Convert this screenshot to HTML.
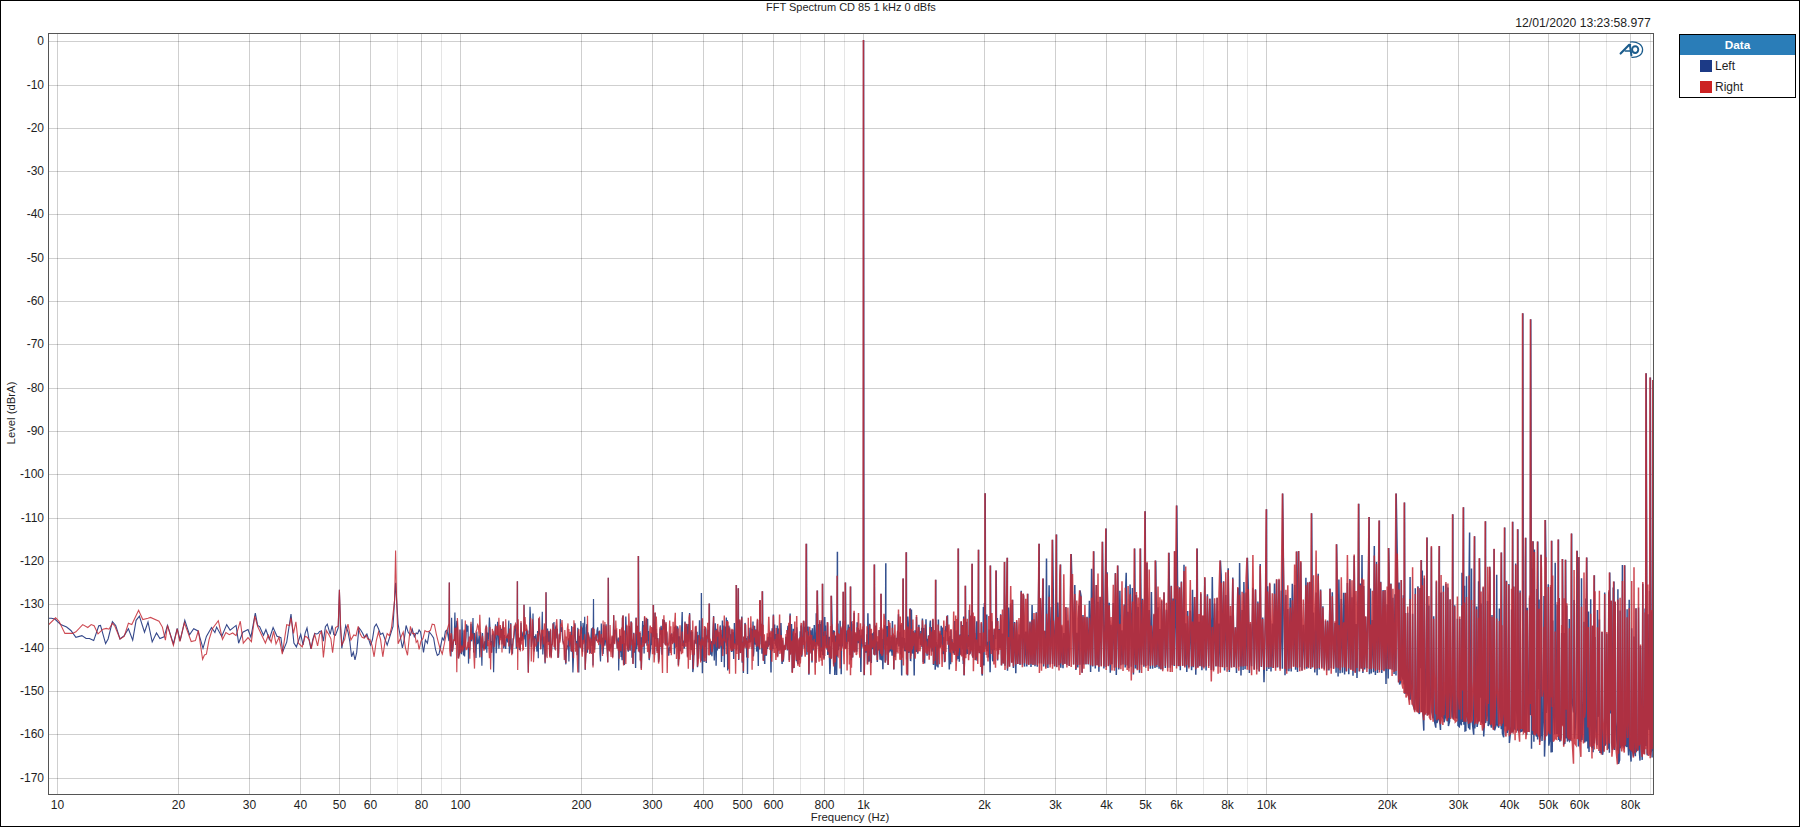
<!DOCTYPE html><html><head><meta charset="utf-8"><style>html,body{margin:0;padding:0;background:#fff;}svg{display:block;}text{font-family:"Liberation Sans",sans-serif;fill:#1e1e1e;}</style></head><body>
<svg width="1800" height="827" viewBox="0 0 1800 827">
<rect x="0" y="0" width="1800" height="827" fill="#fff"/>
<path d="M397.5 34V794M441.5 34V794M800.5 34V794M844.5 34V794M1203.5 34V794M1247.5 34V794M1606.5 34V794M1650.5 34V794" stroke="#000" stroke-opacity="0.1" stroke-width="1" fill="none"/>
<path d="M57.5 34V794M178.5 34V794M249.5 34V794M300.5 34V794M339.5 34V794M370.5 34V794M421.5 34V794M460.5 34V794M581.5 34V794M652.5 34V794M703.5 34V794M742.5 34V794M773.5 34V794M824.5 34V794M863.5 34V794M984.5 34V794M1055.5 34V794M1106.5 34V794M1145.5 34V794M1176.5 34V794M1227.5 34V794M1266.5 34V794M1387.5 34V794M1458.5 34V794M1509.5 34V794M1548.5 34V794M1579.5 34V794M1630.5 34V794" stroke="#000" stroke-opacity="0.19" stroke-width="1" fill="none"/>
<path d="M49 41.5H1653M49 85.5H1653M49 128.5H1653M49 171.5H1653M49 214.5H1653M49 258.5H1653M49 301.5H1653M49 344.5H1653M49 388.5H1653M49 431.5H1653M49 474.5H1653M49 518.5H1653M49 561.5H1653M49 604.5H1653M49 648.5H1653M49 691.5H1653M49 734.5H1653M49 778.5H1653" stroke="#000" stroke-opacity="0.19" stroke-width="1" fill="none"/>
<defs><clipPath id="pc"><rect x="49" y="34" width="1604" height="760"/></clipPath></defs>
<g clip-path="url(#pc)" fill="none" stroke-linejoin="miter">
<path stroke="#34488a" stroke-width="1.1" d="M48.8 618.2L51.4 618.2L54.8 619.0L60.7 624.6L66.6 627.1L70.9 630.5L75.9 637.3L81.9 635.6L86.1 638.5L89.5 638.5L93.7 640.6L98.8 625.8L100.5 625.4L105.6 643.6L108.1 639.0L112.4 621.6L115.7 625.4L120.0 639.0L124.2 635.6L128.4 628.8L132.7 640.2L136.1 620.3L139.4 616.1L144.5 632.2L148.0 622.0L152.2 641.9L156.5 633.0L159.9 638.5L164.1 636.8L167.5 625.4L173.4 644.0L177.2 628.4L180.2 640.6L184.8 620.3L189.5 634.7L193.7 628.8L198.0 630.9L203.0 648.3L206.4 636.4L211.5 627.5L214.9 632.6L216.6 627.1L221.7 636.4L226.7 624.6L230.1 630.1L236.1 625.4L238.6 643.2L242.8 632.2L248.0 629.5L250.9 637.2L255.3 613.0L257.7 625.6L259.6 626.6L263.5 635.3L265.9 629.5L269.3 639.2L273.1 627.6L277.0 636.3L280.9 637.7L282.8 651.7L286.7 642.1L291.0 614.0L293.9 643.0L296.4 646.9L300.7 634.3L303.1 645.0L305.1 633.4L307.0 628.0L308.9 638.9L310.9 648.8L312.8 639.5L314.7 633.4L316.3 634.0L318.0 633.6L319.6 631.4L321.5 631.0L323.4 641.1L325.4 626.8L327.3 624.2L330.2 634.3L332.1 625.6L333.8 634.5L335.5 635.3L338.2 628.0L339.4 589.8L340.6 628.0L341.8 648.3L345.7 625.6L348.0 632.0L349.8 641.5L351.6 656.8L353.3 652.1L355.0 659.8L356.7 652.4L358.9 627.7L360.7 630.0L362.5 633.0L364.7 637.5L366.9 634.0L368.7 639.3L370.5 645.1L372.4 639.8L374.4 626.9L376.3 624.1L378.5 628.7L380.6 634.4L382.8 633.0L385.0 639.3L387.2 645.1L393.0 626.3L395.6 582.7L398.1 624.1L402.4 648.0L404.2 639.6L406.1 625.5L408.2 632.3L410.4 635.0L412.3 629.1L414.3 636.8L416.2 633.0L417.7 633.8L419.1 629.9L420.6 632.0L423.5 652.4L425.4 640.0L427.4 643.2L429.3 632.0L431.5 634.7L433.6 638.0L435.5 649.3L437.3 655.3L439.0 654.1L440.6 646.3L442.3 638.0L443.9 640.4L445.4 631.4L447.0 630.0"/>
<path stroke="#34508f" stroke-width="1.2" d="M447.0 630.0L449.0 641.1L449.4 582.5L449.7 639.7L450.4 635.4L451.0 656.4L451.6 617.8L452.3 651.5L452.8 649.8L453.5 641.4L454.2 640.0L454.9 612.6L455.6 645.0L456.2 630.6L456.8 620.8L457.4 624.2L458.1 658.2L458.7 656.7L459.4 654.1L460.0 629.4L460.6 649.8L461.4 654.2L462.0 619.3L462.8 648.9L463.5 655.5L464.1 630.4L464.6 656.4L465.3 643.3L466.0 637.3L466.6 624.3L467.1 631.6L468.0 625.7L468.5 663.6L469.2 647.0L469.8 650.5L470.4 637.9L471.0 623.7L471.6 641.3L472.2 637.4L473.0 617.9L473.7 652.5L474.5 632.9L475.2 640.4L476.0 658.0L476.8 631.6L477.6 643.9L478.4 642.0L479.1 635.6L479.8 657.4L480.5 631.9L481.2 641.4L481.9 665.8L482.5 633.0L483.3 647.0L484.0 649.2L484.7 641.4L485.4 649.4L486.2 625.7L486.8 652.8L487.5 632.5L488.1 641.2L488.7 635.5L489.4 617.5L489.9 626.0L490.6 645.2L491.1 641.1L491.6 652.5L492.3 635.4L493.0 633.5L493.6 672.3L494.1 646.4L494.7 635.9L495.5 624.3L496.2 653.2L496.9 643.1L497.6 621.7L498.2 632.1L498.9 648.7L499.6 638.6L500.4 626.8L501.0 638.2L501.5 628.8L502.0 644.4L502.5 639.4L503.2 621.6L503.7 648.4L504.4 635.0L505.0 645.1L505.7 649.0L506.4 637.3L507.0 636.2L507.6 642.5L508.2 633.2L508.8 620.5L509.4 653.4L510.1 640.5L510.8 623.0L511.2 649.6L511.8 643.8L512.5 653.7L513.0 638.9L513.6 638.9L514.2 635.0L514.8 626.7L515.5 624.4L516.3 648.5L516.7 647.7L517.2 627.8L517.5 581.2L517.7 642.4L518.2 633.5L518.7 639.8L519.4 649.9L519.8 638.1L520.3 650.1L521.0 622.8L521.8 640.9L522.3 639.4L522.8 632.8L523.4 631.4L523.9 639.5L524.1 604.8L524.5 632.7L525.1 636.4L525.8 646.9L526.4 628.5L527.1 633.0L527.7 632.0L528.3 672.3L528.9 647.9L529.4 634.3L530.0 606.7L530.6 617.6L531.3 647.0L531.8 643.2L532.5 638.1L533.0 613.6L533.5 636.4L534.2 651.4L534.8 636.0L535.3 639.0L535.8 634.4L536.5 645.6L536.9 651.6L537.6 631.0L538.3 658.2L538.8 618.5L539.5 632.0L540.2 636.2L540.7 649.2L541.2 641.4L541.7 637.0L542.3 611.8L542.8 654.4L543.3 643.6L543.9 636.6L544.4 647.3L545.1 663.5L545.6 635.5L546.0 656.8L546.1 592.2L546.6 643.2L547.1 631.1L547.6 628.6L548.1 641.9L548.6 634.4L549.1 631.1L549.7 655.8L550.1 637.6L550.6 630.0L551.2 657.3L551.8 646.1L552.4 643.4L553.0 623.2L553.5 628.9L554.0 622.1L554.5 643.5L555.0 649.6L555.6 627.5L556.2 625.3L556.8 638.4L557.3 628.8L558.0 657.1L558.6 657.0L559.2 634.6L559.8 639.2L560.3 619.0L560.9 632.0L561.4 627.9L562.0 627.6L562.6 639.2L563.1 642.0L563.8 643.3L564.3 645.8L564.8 654.4L565.3 659.7L565.9 664.3L566.4 647.9L566.8 650.2L567.4 645.2L568.0 647.0L568.4 638.3L568.9 661.6L569.4 639.1L570.1 634.4L570.6 643.4L571.2 651.7L571.6 625.9L572.3 646.8L572.9 672.5L573.5 657.4L573.9 640.6L574.5 626.5L575.0 623.2L575.4 638.5L576.1 645.3L576.5 641.0L577.1 655.2L577.8 627.7L578.2 632.5L578.8 672.5L579.2 635.9L579.7 645.7L580.3 647.2L580.8 621.1L581.3 627.8L581.7 633.7L582.2 627.4L582.6 651.8L583.0 622.9L583.6 630.3L584.1 642.4L584.7 616.8L585.2 670.0L585.8 655.2L586.4 627.9L586.9 624.0L587.5 652.7L588.0 632.3L588.6 635.5L589.1 637.4L589.7 643.8L590.3 653.1L590.9 638.0L591.5 628.2L592.1 646.1L592.6 627.6L593.0 665.5L593.5 599.0L593.7 634.4L594.2 643.3L594.6 649.7L595.1 637.7L595.6 637.7L596.0 633.9L596.5 641.0L597.0 630.7L597.7 627.3L598.2 637.8L598.7 642.0L599.1 631.9L599.6 630.9L600.0 653.9L600.5 661.5L600.9 645.6L601.3 623.5L601.9 642.3L602.5 637.8L603.1 654.0L603.5 647.8L603.8 624.4L604.3 637.1L604.9 645.6L605.5 641.0L606.1 624.3L606.6 641.0L607.2 649.6L607.8 661.9L608.3 624.1L608.4 577.7L608.7 633.0L609.1 648.7L609.5 650.6L610.1 643.7L610.6 648.5L611.1 646.7L611.8 641.9L612.1 636.6L612.7 657.1L613.1 646.6L613.7 615.3L614.3 643.3L614.7 638.3L615.2 629.7L615.8 633.5L616.2 629.8L616.7 641.9L617.2 648.2L617.7 640.5L618.3 637.6L618.7 670.6L619.2 647.2L619.8 637.8"/>
<path stroke="#34508f" stroke-width="1.35" d="M619.8 637.8L620.2 652.6L620.6 635.8L621.1 657.1L621.6 651.9L622.1 660.2L622.5 618.2L623.1 615.6L623.6 664.0L624.0 643.2L624.4 665.1L625.0 648.5L625.4 641.4L625.8 616.6L626.3 634.8L626.8 626.0L627.3 643.2L627.8 649.2L628.3 651.7L628.8 645.7L629.3 626.1L629.7 633.3L630.1 650.7L630.7 632.4L631.1 621.5L631.6 623.6L632.0 657.7L632.6 639.8L633.0 663.7L633.4 645.6L633.8 632.7L634.3 652.7L634.8 642.9L635.2 646.3L635.6 668.0L636.1 617.4L636.7 649.2L637.3 625.8L637.7 642.4L638.1 645.2L638.5 643.0L638.5 556.0L639.0 648.2L639.5 652.5L640.0 632.9L640.4 660.1L640.9 637.3L641.3 668.4L641.8 647.4L642.2 636.2L642.7 621.0L643.2 642.8L643.8 625.1L644.1 653.5L644.6 617.1L645.0 633.7L645.4 643.3L645.9 638.7L646.5 618.3L647.0 645.7L647.6 618.9L648.0 640.9L648.5 631.0L648.9 645.3L649.2 660.1L649.8 655.1L650.2 651.9L650.6 647.8L651.0 632.4L651.4 645.1L652.0 638.0L652.5 627.5L652.9 634.1L653.2 637.3L653.5 605.0L653.6 633.5L654.1 621.7L654.6 654.7L655.1 613.0L655.4 639.0L655.8 628.9L656.3 636.1L656.7 633.2L657.1 651.3L657.5 641.0L657.8 638.1L658.2 648.9L658.6 662.0L659.1 658.4L659.6 650.0L660.1 628.6L660.5 634.6L661.1 625.9L661.6 632.0L662.0 654.8L662.5 645.9L662.9 619.3L663.4 629.3L663.9 627.7L664.3 620.2L664.7 623.3L665.1 643.6L665.6 644.3L666.0 623.6L666.4 631.4L666.9 633.8L667.2 644.7L667.7 643.2L668.2 649.9L668.7 655.6L669.3 649.3L669.7 647.2L670.1 650.9L670.4 635.5L670.8 636.2L671.3 640.6L671.8 633.4L672.2 643.7L672.7 640.2L673.1 637.1L673.5 641.6L673.9 631.6L674.4 654.3L674.8 627.1L675.3 629.0L675.7 625.6L676.2 641.9L676.5 647.0L677.0 629.5L677.5 626.3L678.0 629.1L678.4 664.9L678.9 655.0L679.4 636.2L680.0 649.9L680.4 650.3L680.8 645.1L681.2 636.8L681.5 633.3L681.9 620.9L682.2 612.1L682.6 646.0L683.1 642.7L683.5 640.6L684.0 648.7L684.5 646.8L685.0 621.5L685.4 642.1L685.8 642.3L686.3 634.1L686.6 624.1L687.0 628.0L687.5 656.5L687.9 644.1L688.3 623.9L688.7 641.7L689.1 634.2L689.6 613.0L690.1 633.0L690.5 643.4L691.1 649.9L691.5 631.4L691.9 636.0L692.4 631.8L692.8 672.1L693.3 668.5L693.8 655.6L694.2 654.6L694.5 640.4L694.9 643.1L695.3 638.6L695.7 626.5L696.1 643.3L696.6 643.1L697.1 631.7L697.5 667.2L698.1 635.3L698.5 658.6L699.0 645.5L699.5 620.3L700.0 643.7L700.3 644.4L700.7 642.7L701.2 660.7L701.4 593.0L701.6 649.4L702.0 641.4L702.4 673.3L702.7 637.3L703.2 644.4L703.6 646.0L704.1 662.0L704.5 629.1L704.9 647.0L705.4 627.5L705.9 629.4L706.3 662.9L706.8 635.5L707.3 637.8L707.7 633.9L708.0 629.8L708.4 642.4L708.8 631.7L709.3 634.5L709.4 603.4L709.6 646.3L710.1 650.0L710.6 654.8L710.9 642.8L711.4 641.3L711.9 656.2L712.3 650.4L712.7 637.4L713.2 627.0L713.6 616.0L713.9 648.0L714.3 660.5L714.8 642.8L715.3 623.2L715.6 631.0L716.1 665.7L716.5 645.6L717.0 628.7L717.4 650.6L717.7 630.5L718.2 633.6L718.7 647.0L719.0 648.5L719.4 646.9L719.8 647.7L720.2 625.4L720.7 636.8L721.1 634.8L721.5 662.0L721.9 649.2L722.4 620.6L722.8 649.2L723.3 635.0L723.6 638.6L724.0 625.5L724.3 667.2L724.8 626.4L725.1 640.2L725.5 641.3L725.9 641.6L726.3 617.4L726.7 645.7L727.2 620.0L727.7 670.4L728.1 636.8L728.4 640.5L728.8 625.7L729.1 627.7L729.5 630.9L729.8 629.3L730.2 645.7L730.7 648.2L731.0 634.3L731.5 651.9L731.9 629.8L732.4 648.3L732.9 651.5L733.2 632.2L733.7 659.0L734.0 643.5L734.4 623.1L734.7 629.6L735.2 644.5L735.6 642.0L736.0 644.5L736.4 650.5L736.4 585.0L736.9 645.6L737.3 620.4L737.8 624.9L738.2 644.7L738.4 588.2L738.7 659.9L739.0 646.7L739.4 639.8L739.8 620.3L740.1 646.7L740.5 652.9L740.9 629.5L741.3 626.9L741.8 616.5L742.2 662.7L742.6 650.3L743.1 641.5L743.4 673.0L743.8 636.7L744.2 646.5L744.6 643.6L745.0 623.0L745.5 625.0L746.0 647.4L746.3 638.1L746.7 657.4L747.1 641.6L747.5 673.9L747.9 636.2L748.3 642.0L748.7 643.0L749.0 627.8L749.5 641.4L750.0 641.9L750.5 641.5L750.8 627.6L751.3 634.1L751.7 629.1L752.1 649.1L752.5 645.8L753.0 621.6L753.4 656.4L753.8 651.7L754.3 636.6L754.6 625.8L755.1 638.8L755.5 644.6L755.8 629.4L756.3 633.7L756.6 651.6L757.1 646.2L757.5 619.8L757.9 646.1L758.3 666.1L758.7 631.7L759.1 649.3L759.4 645.5L759.8 643.9"/>
<path stroke="#34508f" stroke-width="1.5" d="M759.8 643.9L760.1 600.3L760.2 619.1L760.7 630.9L761.2 623.8L761.6 640.6L762.0 653.7L762.4 632.4L762.5 591.3L762.8 633.3L763.1 642.4L763.4 660.3L763.8 655.2L764.3 644.2L764.7 663.9L765.0 642.4L765.4 642.6L765.8 642.1L766.3 655.8L766.8 641.4L767.3 648.8L767.7 645.3L768.0 636.7L768.5 642.9L768.8 645.0L769.3 644.3L769.7 632.6L770.1 643.5L770.5 640.2L771.0 672.5L771.3 637.2L771.8 651.4L772.2 628.3L772.6 633.1L773.0 649.1L773.4 614.5L773.8 632.5L774.2 640.7L774.6 624.4L775.1 643.9L775.4 640.6L775.9 645.8L776.3 634.0L776.6 648.3L776.9 645.2L777.3 625.6L777.6 656.1L778.1 648.7L778.4 628.4L778.8 633.7L779.1 642.6L779.6 639.0L779.9 650.3L780.4 646.2L780.9 622.9L781.2 633.4L781.7 650.2L782.1 664.0L782.6 640.2L782.9 645.9L783.3 661.6L783.7 652.5L784.2 646.8L784.6 645.8L784.9 648.9L785.3 648.6L785.7 641.5L786.1 636.9L786.5 644.2L786.9 640.8L787.4 650.4L787.7 629.6L788.0 625.9L788.4 631.9L788.8 625.2L789.3 660.2L789.7 641.5L790.1 613.5L790.4 654.2L790.7 639.5L791.1 638.2L791.5 624.0L791.9 640.3L792.3 672.3L792.6 660.4L793.1 639.6L793.4 628.7L793.7 666.8L794.0 668.0L794.5 647.0L794.8 636.5L795.1 639.5L795.5 633.2L795.9 649.8L796.4 661.3L796.7 627.2L797.1 636.8L797.5 662.3L797.9 663.9L798.2 646.7L798.7 652.5L799.1 639.4L799.6 659.9L799.9 643.0L800.3 631.2L800.8 654.3L801.1 625.5L801.4 627.2L801.7 656.8L802.0 651.6L802.3 640.7L802.7 641.9L803.0 637.4L803.3 624.8L803.6 621.0L804.1 645.6L804.4 648.3L804.8 633.9L805.2 626.8L805.6 632.2L806.0 619.1L806.5 543.8L806.9 654.7L807.3 630.4L807.6 647.1L808.0 626.6L808.3 634.2L808.6 639.9L808.9 674.7L809.4 636.5L809.7 642.8L810.2 644.3L810.5 632.2L810.8 630.3L811.2 653.6L811.6 632.6L812.0 662.6L812.4 628.3L812.8 645.7L813.1 650.5L813.4 641.0L813.9 646.5L814.3 625.1L814.7 634.9L815.2 636.8L815.5 649.2L815.9 662.5L816.3 613.3L816.7 642.2L817.1 642.8L817.4 590.4L817.5 605.2L817.8 634.9L818.2 638.1L818.5 645.9L818.8 625.0L819.1 624.7L819.5 651.2L819.8 621.4L820.2 657.3L820.6 624.1L820.9 638.1L821.3 651.5L821.8 620.2L822.2 623.9L822.6 655.1L822.6 583.7L823.0 649.8L823.3 632.2L823.7 634.2L824.0 658.5L824.4 636.4L824.7 616.9L825.1 638.3L825.5 625.6L825.9 645.8L826.3 646.4L826.7 635.1L827.1 649.8L827.5 622.6L827.8 655.0L828.1 649.7L828.6 646.4L828.9 644.5L829.2 636.7L829.5 656.6L829.9 674.1L830.2 667.1L830.7 646.3L831.1 656.1L831.4 658.4L831.4 595.7L831.8 612.7L832.2 631.6L832.6 635.4L833.0 641.9L833.4 630.2L833.7 664.6L834.0 644.2L834.3 630.7L834.8 675.0L835.2 661.4L835.6 635.5L835.9 643.6L836.2 655.4L836.6 675.0L836.9 654.2L837.2 631.7L837.4 551.8L837.6 656.6L838.0 623.5L838.3 650.3L838.8 644.3L839.1 643.8L839.4 639.8L839.8 646.4L840.1 620.8L840.5 646.1L840.9 627.7L841.2 674.2L841.6 630.1L841.9 631.2L842.3 646.5L842.6 629.2L843.0 621.2L843.3 629.5L843.4 591.7L843.7 627.7L844.1 626.3L844.5 648.5L844.8 628.8L845.2 647.0L845.5 645.0L845.5 582.4L845.9 648.6L846.2 643.0L846.5 648.4L846.8 643.3L847.1 644.2L847.4 630.4L847.8 632.0L848.2 624.6L848.6 641.4L849.0 626.7L849.4 638.6L849.7 646.1L850.1 655.2L850.5 648.1L850.6 586.4L850.8 632.8L851.1 660.2L851.4 621.5L851.8 647.2L852.2 656.5L852.6 657.6L853.0 644.5L853.4 623.7L853.7 643.9L854.1 612.7L854.4 651.8L854.6 650.7L855.1 649.7L855.5 633.6L855.9 642.5L856.3 647.6L856.8 651.8L857.2 622.3L857.6 640.0L858.1 627.9L858.5 643.3L858.8 635.4L859.1 636.9L859.5 629.7L859.9 635.2L860.2 645.6L860.5 645.1L860.9 671.9L861.3 638.0L861.5 635.9L862.0 635.7L862.4 629.2L862.7 638.0L863.1 646.6L863.5 614.6L863.6 40.0L863.9 612.9L864.2 675.3L864.7 645.7L864.9 648.3L865.3 645.0L865.8 652.6L866.0 648.5L866.4 642.0L866.7 647.0L867.1 634.3L867.5 663.7L867.9 613.3L868.3 637.6L868.7 642.6L869.0 661.7L869.4 648.5L869.7 623.7L870.2 650.2L870.6 661.0L870.8 633.6L871.3 662.9L871.6 644.5L871.9 642.0L872.2 633.4L872.6 639.6L872.9 649.1L873.3 646.6L873.7 632.0L874.0 654.3L874.4 619.2L874.5 564.6L874.7 655.3L875.0 646.6L875.5 641.7L875.8 625.6L876.1 634.9L876.5 654.8L876.9 641.3L877.3 662.1L877.7 647.0L878.0 644.9L878.3 641.7L878.7 650.0L879.1 630.0L879.4 633.7L879.7 652.6L880.1 659.6L880.4 657.1L880.8 646.1L881.1 593.8L881.2 620.5L881.5 660.3L881.9 657.5L882.1 639.0L882.6 656.0L882.9 669.3L883.3 643.6L883.7 629.3L884.0 631.4L884.3 645.0L884.7 625.0L885.1 662.6L885.5 655.5L885.8 563.2L885.8 660.6L886.2 626.7L886.5 630.2L886.8 644.4L887.0 645.2L887.4 625.9L887.7 627.5L888.1 665.0L888.5 620.1L888.8 640.7L889.1 652.4L889.5 625.6L889.9 650.7L890.3 649.5L890.7 650.3L891.1 647.4L891.4 636.7L891.7 638.4L892.1 655.8L892.4 621.1L892.8 638.7L893.2 648.1L893.5 637.0L893.8 669.6L894.2 641.3L894.6 635.3L894.9 657.0L895.3 649.1L895.7 653.8L896.0 649.6L896.3 642.4L896.6 637.8L897.0 644.4L897.3 639.5L897.7 631.1L898.0 632.8L898.5 614.3L898.9 646.4L899.2 633.5L899.6 632.4L899.9 635.9L900.3 634.2L900.7 654.4L900.9 624.4L901.2 642.7L901.7 675.4L902.0 637.2L902.3 645.0L902.7 644.3L903.0 648.3L903.2 578.4L903.4 641.3L903.7 643.9L904.0 645.1L904.3 638.0L904.8 651.3L905.1 650.6L905.5 650.5L905.9 645.1L906.2 641.3L906.4 552.3L906.6 659.6L906.9 628.5L907.2 643.8L907.5 675.4L907.8 616.6L908.2 622.7L908.5 644.2L908.9 652.9L909.2 639.5L909.5 643.4L909.8 639.6L910.2 608.3L910.5 660.3L910.7 660.4L911.0 631.1L911.4 609.5L911.8 634.2L912.1 630.5L912.4 653.6L912.9 645.4L913.2 631.1L913.5 636.3L913.8 642.5L914.2 675.4L914.5 632.8L914.8 639.1L915.1 630.3L915.5 650.8L915.8 632.5L916.1 652.0L916.5 617.0L916.9 636.1L917.2 651.6L917.5 643.4L917.8 653.7L918.2 639.2L918.5 636.9L918.9 624.7L919.3 634.8L919.6 636.2L919.9 638.7L920.2 634.5L920.5 645.1L920.9 631.1L921.4 645.1L921.7 627.8L922.0 647.3L922.4 618.6L922.8 629.9L923.2 662.3L923.6 628.1L923.9 659.5L924.3 649.6L924.6 663.6L925.0 645.9L925.4 625.0L925.7 639.1L926.0 619.3L926.4 637.8L926.7 644.6L927.1 655.7L927.3 642.7L927.7 638.7L928.2 647.8L928.6 635.2L928.9 646.8L929.2 655.0L929.6 647.7L930.0 624.6L930.4 620.6L930.7 647.4L931.0 631.7L931.3 626.9L931.7 651.6L932.1 645.2L932.5 647.9L932.9 619.5L933.3 644.1L933.5 664.9L933.8 649.8L934.2 631.5L934.6 661.1L934.9 630.1L935.2 669.8L935.6 658.7L935.8 579.7L935.9 661.7L936.3 641.9L936.7 654.5L937.0 666.4L937.4 644.6L937.8 649.7L938.0 667.5L938.4 619.4L938.7 645.6L939.0 648.1L939.4 645.8L939.7 633.6L940.1 638.7L940.5 646.9L940.8 644.9L941.2 625.7L941.4 636.3L941.8 643.6L942.1 629.5L942.4 627.5L942.8 654.1L943.1 650.6L943.4 637.0L943.8 646.0L944.2 645.0L944.5 662.3L944.8 657.9L945.2 638.2L945.6 632.7L945.9 626.1L946.2 627.1L946.4 631.8L946.8 617.3L947.1 631.2L947.5 615.3L947.8 632.4L948.2 644.1L948.5 637.4L948.9 650.5L949.3 669.6L949.7 641.3L950.0 636.0L950.3 647.7L950.6 664.2L951.0 629.9L951.3 649.7L951.6 645.4L951.9 639.1L952.3 643.1L952.6 644.7L952.9 650.4L953.3 653.2L953.7 642.7L954.1 647.9L954.4 654.4L954.7 620.9L955.0 649.0L955.4 649.7L955.7 630.5L956.0 645.0L956.4 648.5L956.7 660.6L957.1 642.8L957.4 630.1L957.7 656.3L958.0 617.4L958.3 659.1L958.4 548.6L958.6 640.1L958.9 634.6L959.3 661.7L959.7 638.3L960.0 643.7L960.3 642.4L960.6 634.3L961.0 654.7L961.2 621.6L961.5 645.5L961.8 642.0L962.1 639.1L962.4 624.9L962.7 649.4L963.1 641.7L963.3 664.0L963.7 616.6L964.1 675.5L964.4 662.7L964.7 644.9L965.1 644.5L965.5 630.3L965.5 585.8L965.8 654.7L966.2 651.4L966.6 621.8L966.9 634.9L967.3 641.9L967.6 653.9L968.0 637.6L968.3 647.0L968.6 634.9L969.0 638.7L969.3 610.0L969.7 636.0L970.0 653.0L970.4 652.4L970.7 640.1L971.0 615.4L971.4 650.0L971.8 613.5L972.1 616.8L972.2 563.8L972.4 654.8L972.7 656.1L973.1 657.7L973.4 642.8L973.8 630.5L974.2 618.7L974.5 617.2L974.8 629.7L975.1 653.6L975.4 660.3L975.7 655.0L976.1 637.7L976.4 648.0L976.8 621.2L977.1 660.8L977.5 648.3L977.8 650.9L978.1 633.6L978.4 643.0L978.6 549.7L978.7 642.3L979.1 648.4L979.4 653.1L979.8 646.2L980.1 651.4L980.4 645.8L980.7 653.7L981.0 651.2L981.3 623.3L981.6 644.2L982.0 673.7L982.3 675.6L982.7 653.2L983.1 658.6L983.4 607.0L983.7 612.9L984.0 665.5L984.4 603.1L984.8 638.9L985.2 629.2L985.2 493.3L985.5 618.8L985.8 645.1L986.2 647.3L986.5 649.4L986.8 614.6L987.0 651.2L987.3 646.5L987.6 641.8L988.0 651.5L988.4 642.4L988.8 657.4L989.1 629.5L989.5 649.6L989.9 662.8L990.1 672.2L990.5 649.1L990.5 565.6L990.8 633.2L991.2 637.9L991.5 650.3L991.9 621.3L992.3 632.4L992.6 659.2L992.9 661.3L993.3 637.8L993.6 635.0L993.9 647.0L994.2 629.3L994.5 650.2L994.8 633.6L995.2 638.4L995.5 639.0L995.8 624.7L996.2 570.4L996.5 623.5L996.9 625.9L997.3 618.0L997.6 660.5L998.0 636.7L998.2 653.6L998.6 645.7L998.9 628.9L999.3 636.7L999.7 648.0L1000.0 643.2L1000.7 614.2L1001.5 665.6L1002.5 633.6L1003.3 663.6L1004.2 616.2L1004.6 561.9L1005.0 665.8L1006.2 620.5L1007.4 557.7L1007.5 670.7L1008.6 607.6L1009.5 666.5L1010.7 603.4L1011.7 662.6L1012.5 620.9L1012.6 599.7L1013.4 668.0L1014.6 621.9L1015.8 673.3L1016.7 621.4L1017.8 664.0L1019.0 634.4L1020.0 664.9L1021.2 590.8L1022.4 664.8L1023.2 593.8L1023.6 597.1L1024.5 666.6L1025.7 631.5L1026.8 666.6L1027.8 593.8L1027.9 628.0L1028.8 664.6L1030.0 621.5L1031.0 667.1L1032.1 605.0L1033.0 664.8L1034.0 619.3L1035.0 666.2L1036.3 612.3L1037.3 666.7L1038.4 606.1L1039.2 543.8L1039.4 663.5L1040.4 598.5L1041.5 663.6L1042.3 609.2L1043.2 578.4L1043.6 666.5L1044.5 630.7L1045.8 667.4L1046.5 558.5L1046.7 606.3L1047.9 668.1L1049.1 585.3L1050.1 664.6L1051.4 606.9L1052.5 664.1L1052.6 539.8L1053.4 602.5L1054.6 666.4L1055.8 614.9L1056.6 534.5L1056.7 666.9L1057.8 602.6L1059.0 665.2L1059.8 604.3L1060.6 564.6L1060.8 667.7L1061.7 626.3L1063.0 668.2L1063.8 633.0L1064.9 663.8L1065.9 607.1L1066.9 664.9L1067.9 620.6L1069.2 665.9L1070.1 626.9L1071.2 553.9L1072.5 602.2L1073.6 664.5L1074.8 585.1L1075.9 670.0L1076.8 632.7L1077.8 667.6L1078.8 605.6L1079.9 664.7L1080.0 590.4L1081.0 595.9L1082.1 672.7L1083.0 614.9L1083.9 664.4L1084.9 617.3L1086.0 664.4L1087.0 616.7L1088.3 664.5L1089.4 600.8L1090.6 671.9L1091.6 568.7L1092.7 666.5L1093.8 551.3L1093.9 578.7L1095.3 668.5L1096.2 602.6L1096.5 585.0L1097.1 664.9L1098.0 601.8L1098.9 671.7L1100.1 596.8L1101.3 665.8L1102.6 541.7L1103.9 668.4L1105.0 625.1L1106.1 528.4L1106.2 667.0L1107.1 572.3L1108.4 665.8L1109.2 602.7L1110.3 672.8L1111.1 624.8L1112.0 664.3L1113.3 602.9L1114.4 667.7L1115.4 573.0L1116.3 674.9L1117.5 596.4L1117.8 565.6L1118.8 669.5L1119.9 590.7L1120.9 665.3L1122.0 630.3L1123.0 664.5L1124.2 604.6L1125.2 667.6L1125.7 587.7L1126.2 572.8L1127.2 665.4L1128.1 611.7L1128.9 668.2L1130.1 584.6L1131.3 666.7L1132.4 588.0L1133.4 674.4L1134.6 626.6L1134.7 548.4L1135.5 668.5L1136.4 595.1L1137.3 669.3L1138.2 607.0L1139.5 672.8L1140.4 626.2L1140.5 548.4L1141.6 664.8L1142.6 598.8L1143.9 666.8L1144.9 584.4L1145.2 511.2L1145.8 665.9L1147.0 562.9L1148.2 665.4L1149.2 610.0L1150.3 668.8L1151.4 591.9L1152.6 668.7L1154.0 614.4L1155.0 668.1L1155.6 560.6L1155.8 562.2L1156.9 667.2L1158.0 607.3L1159.1 668.7L1159.9 628.9L1160.9 669.5L1161.7 600.7L1162.7 669.4L1164.0 592.4L1165.3 668.0L1166.4 609.8L1167.7 667.8L1169.0 552.8L1170.3 667.7L1171.3 585.7L1172.2 665.2L1173.1 598.5L1174.2 666.0L1174.8 551.3L1175.4 598.3L1176.6 665.9L1176.8 505.4L1177.7 598.6L1178.6 666.3L1179.5 587.2L1180.3 670.2L1181.4 581.5L1182.7 665.7L1184.0 564.7L1184.8 666.4L1185.7 623.3L1186.8 671.9L1187.7 611.0L1188.9 667.1L1190.3 610.4L1191.6 670.2L1192.5 589.7L1193.4 667.3L1194.6 597.1L1195.8 674.7L1196.7 595.2L1197.2 548.4L1197.9 667.1L1199.0 621.8L1199.9 666.2L1200.8 593.6L1201.9 670.3L1202.9 615.9L1203.9 667.2L1204.8 577.8L1206.1 670.4L1207.4 594.2L1208.7 666.0L1209.9 598.4L1211.3 669.9L1212.3 576.9L1213.5 669.9L1214.6 603.5L1216.0 666.6L1217.1 597.9L1218.1 666.6L1219.0 623.5L1220.3 667.0L1220.4 560.6L1221.2 575.3L1222.4 667.1L1223.6 581.2L1224.6 670.6L1225.8 594.9L1227.1 666.9L1228.2 568.3L1229.3 672.1L1230.5 615.8L1231.5 667.6L1232.8 577.4L1234.0 666.9L1235.4 627.2L1236.5 673.1L1237.8 588.0L1238.8 666.8L1239.6 563.0L1241.0 675.6L1242.1 609.9L1243.1 670.0L1243.9 581.9L1245.1 669.2L1246.1 592.4L1247.2 666.3L1247.4 557.7L1248.3 589.3L1249.4 672.9L1250.4 623.7L1251.6 666.3L1252.9 587.7L1254.2 669.4L1255.5 589.3L1256.7 669.6L1257.9 601.5L1259.2 671.5L1260.2 564.1L1261.4 667.1L1262.7 617.6L1264.0 682.2L1265.4 615.8L1266.6 509.2L1266.7 671.1L1267.6 586.2L1268.9 669.0L1269.7 583.8L1271.0 671.4L1272.3 623.5L1273.2 667.9L1274.5 583.6L1275.6 667.7L1276.6 579.6L1277.6 667.5L1279.0 579.8L1280.1 668.7L1281.3 590.5L1282.4 668.8L1282.7 493.4L1283.7 589.7L1285.0 675.2L1285.9 595.1L1286.7 670.8L1287.8 609.1L1288.9 671.2L1290.2 597.9L1291.2 671.6L1292.3 583.8L1293.5 666.6L1294.6 584.9L1295.6 669.8L1296.5 589.1L1296.7 551.5L1297.5 671.9L1298.6 550.9L1299.8 667.2L1300.8 562.2L1302.0 670.5L1303.3 624.8L1304.6 668.4L1305.9 577.8L1306.8 668.8L1307.7 582.7L1308.5 667.6L1309.7 581.8L1310.7 669.1L1311.5 583.8L1311.7 513.3L1312.6 667.4L1313.5 612.6L1314.8 672.6L1316.1 592.6L1317.1 675.3L1318.2 573.8L1319.3 669.6L1320.6 589.4L1321.8 667.7L1322.9 606.3L1324.2 669.0L1325.5 620.9L1326.7 670.6L1327.6 620.4L1328.9 670.5L1330.0 588.6L1331.2 668.3L1332.3 592.3L1333.6 668.6L1335.0 623.0L1336.1 672.8L1336.7 544.2L1337.0 572.9L1338.1 676.6L1338.9 579.4L1340.1 673.3L1341.3 599.0L1342.4 672.7L1343.6 592.8L1344.6 674.4L1345.4 592.7L1346.4 671.6L1347.4 583.0L1348.8 674.2L1349.9 579.0L1350.9 669.2L1352.0 597.2L1353.0 675.8L1354.2 555.8L1355.2 672.2L1356.1 624.1L1357.0 678.1L1358.2 577.7L1358.8 503.7L1359.4 671.6L1360.3 583.6L1361.2 668.6L1362.0 555.1L1362.9 673.1L1363.7 586.1L1364.7 669.6L1365.7 616.7L1366.9 668.2L1368.2 597.7L1369.2 516.9L1369.4 674.3L1370.4 588.5L1371.2 673.4L1372.4 620.1L1373.5 672.2L1374.3 546.0L1375.4 674.9L1376.5 562.0L1377.5 672.9L1378.3 621.6L1379.4 520.6L1379.5 669.9L1380.7 581.7L1381.8 673.0L1383.1 590.0L1384.0 670.6L1385.0 590.2L1386.0 683.9L1387.2 604.3L1388.2 678.6L1388.8 548.0L1389.2 585.1L1390.0 669.0L1390.9 583.6L1392.1 669.7L1392.9 597.8L1394.1 674.1L1395.0 594.3L1396.0 675.5L1396.2 493.6L1397.3 559.2L1398.6 682.2L1399.1 582.6L1399.6 684.6L1400.8 681.5L1401.3 580.1L1401.8 672.9L1402.9 679.6L1403.4 595.3L1404.0 684.5L1404.6 502.6L1405.0 693.9L1405.5 613.1L1406.0 690.5L1407.2 693.9L1407.7 612.8L1408.3 694.4L1409.5 699.6L1410.1 576.9L1410.6 699.6L1412.1 679.9L1412.6 613.7L1413.1 705.0L1414.8 710.6L1415.3 588.2L1415.9 691.7L1417.3 711.8L1417.9 586.3L1418.4 711.7L1419.4 714.0L1420.0 588.1L1420.5 668.3L1421.4 560.0L1421.8 712.1L1422.3 570.4L1422.9 713.1L1423.8 730.6L1424.3 578.2L1424.9 714.8L1426.2 669.6L1426.7 610.1L1427.1 537.5L1427.3 714.2L1428.3 713.9L1428.9 605.5L1429.4 714.5L1430.8 690.1L1431.4 547.2L1431.9 712.3L1433.1 718.4L1433.7 616.3L1434.2 719.6L1435.8 727.7L1436.4 581.5L1436.9 723.0L1438.5 718.3L1439.1 566.6L1439.4 546.1L1439.6 719.2L1440.5 730.0L1441.1 592.6L1441.6 715.5L1442.9 717.6L1443.4 585.7L1444.0 722.3L1445.4 717.1L1445.9 583.8L1446.5 706.8L1447.3 721.5L1447.9 587.4L1448.4 726.0L1449.6 721.1L1450.1 599.6L1450.7 685.2L1452.1 717.7L1452.6 600.0L1452.9 514.2L1453.2 719.2L1454.2 707.5L1454.7 605.3L1455.3 717.6L1456.9 717.8L1457.4 618.8L1458.0 725.5L1459.3 726.6L1459.8 618.9L1460.4 722.7L1461.4 725.3L1462.0 572.8L1462.5 722.0L1463.6 507.3L1463.9 724.7L1464.5 585.8L1465.0 730.8L1465.9 730.4L1466.5 576.3L1467.0 711.6L1468.6 728.2L1469.1 576.0L1469.6 532.6L1469.7 729.6L1470.9 699.5L1471.5 568.4L1472.0 719.6L1473.7 734.7L1474.2 583.7L1474.7 536.2L1474.8 728.5L1476.0 708.7L1476.6 606.5L1477.1 726.9L1478.1 721.1L1478.6 581.3L1479.2 721.3L1479.6 558.3L1480.6 697.7L1481.1 603.5L1481.7 721.7L1482.6 722.9L1483.2 587.4L1483.7 736.4L1484.5 721.3L1485.1 604.7L1485.6 521.3L1485.6 723.0L1487.1 712.4L1487.6 601.1L1488.2 726.0L1489.5 723.1L1489.8 566.7L1490.0 587.0L1490.6 723.2L1491.4 727.7L1492.0 614.9L1492.5 711.7L1493.5 729.2L1494.1 549.1L1494.6 730.4L1496.1 725.2L1496.7 574.8L1497.2 724.0L1498.8 727.6L1499.4 608.4L1499.9 695.5L1501.3 729.2L1501.5 552.5L1501.9 623.7L1502.4 733.1L1503.7 737.3L1504.3 609.7L1504.8 527.5L1504.8 725.6L1506.0 725.7L1506.5 580.8L1507.1 733.2L1508.3 726.1L1508.9 584.0L1509.4 743.0L1511.0 726.5L1511.6 609.5L1512.1 732.8L1512.8 521.7L1513.2 731.8L1513.7 586.6L1514.3 728.7L1515.1 729.1L1515.7 563.5L1516.2 699.3L1517.5 730.8L1517.9 529.3L1518.0 573.8L1518.6 731.1L1519.6 729.7L1520.1 590.6L1520.7 731.5L1522.3 730.8L1522.8 607.7L1522.9 313.3L1523.4 730.5L1524.8 731.5L1525.4 565.7L1525.8 537.7L1525.9 729.2L1526.7 734.9L1527.2 607.7L1527.8 683.2L1529.0 731.9L1529.6 597.8L1530.1 715.0L1530.8 319.3L1531.5 748.8L1532.0 568.4L1532.6 734.7L1533.1 541.3L1533.9 741.8L1534.4 549.4L1535.0 730.2L1536.5 736.5L1537.0 589.0L1537.6 739.5L1537.8 541.6L1538.6 689.2L1539.1 599.6L1539.7 742.0L1540.9 731.1L1541.2 554.7L1541.4 595.4L1542.0 740.9L1543.4 712.0L1544.0 596.0L1544.5 756.6L1545.3 732.9L1545.4 519.9L1545.9 557.3L1546.4 712.9L1547.7 694.4L1548.3 584.3L1548.8 745.7L1550.0 738.8L1550.6 587.0L1551.1 752.6L1551.8 540.7L1552.2 752.2L1552.7 620.5L1553.3 707.0L1554.7 734.2L1555.2 562.8L1555.8 698.4L1556.7 734.1L1557.3 604.7L1557.8 734.1L1558.5 539.5L1558.7 739.9L1559.2 598.0L1559.8 741.6L1561.1 737.4L1561.7 632.9L1562.2 725.0L1562.6 558.9L1563.7 745.3L1564.2 633.1L1564.8 744.1L1565.7 559.8L1566.3 738.6L1566.8 605.5L1567.4 741.4L1568.7 738.7L1569.3 618.9L1569.8 740.4L1570.9 738.7L1571.4 574.6L1571.7 533.5L1572.0 698.5L1573.5 712.5L1574.1 600.0L1574.6 738.8L1576.1 711.7L1576.6 616.5L1577.2 550.7L1578.4 746.6L1578.9 557.2L1579.5 740.5L1580.9 741.0L1581.5 578.3L1582.0 739.9L1583.5 702.4L1584.0 621.8L1584.6 742.5L1585.4 739.8L1585.9 598.5L1586.5 741.6L1586.8 557.6L1587.9 748.4L1588.5 611.4L1589.0 752.1L1590.2 706.4L1590.7 599.3L1591.3 744.7L1592.0 748.0L1592.6 625.9L1593.1 752.2L1594.4 575.2L1594.4 743.4L1595.0 637.1L1595.5 719.4L1597.0 745.2L1597.5 609.9L1598.1 717.0L1598.9 709.4L1599.4 619.4L1600.0 752.2L1601.4 752.3L1602.0 631.9L1602.5 754.8L1604.2 745.1L1604.7 592.4L1605.3 745.7L1606.2 711.7L1606.8 633.8L1607.3 719.2L1608.3 748.6L1608.8 592.3L1609.4 752.8L1609.8 572.5L1610.8 713.6L1611.3 600.9L1611.9 744.8L1612.6 749.9L1613.2 587.6L1613.7 747.8L1614.0 581.5L1614.6 750.1L1615.2 602.3L1615.7 721.7L1617.4 750.5L1617.9 589.2L1618.5 763.9L1619.6 760.2L1620.1 610.5L1620.7 746.9L1621.8 745.1L1622.4 565.1L1622.9 745.8L1624.3 747.5L1624.8 565.2L1624.8 592.1L1625.4 744.6L1626.6 747.0L1627.1 609.3L1627.7 737.9L1628.6 755.4L1629.2 599.8L1629.7 745.3L1631.1 761.6L1631.7 628.3L1632.2 748.3L1633.4 756.5L1634.0 636.4L1634.5 749.6L1635.4 756.2L1636.0 608.3L1636.5 751.0L1638.0 749.1L1638.5 607.5L1639.1 746.9L1640.0 760.6L1640.5 646.0L1641.1 729.2L1642.2 759.9L1642.8 583.8L1643.3 749.3L1644.5 753.8L1645.1 608.4L1645.6 746.1L1646.2 373.2L1647.2 755.2L1647.8 614.2L1648.3 721.1L1649.1 729.9L1649.6 591.1L1650.2 755.4L1650.4 377.4L1651.0 752.2L1651.5 611.6L1652.1 757.4L1653.2 380.0L1653.3 750.9L1653.8 639.2L1654.4 745.0"/>
<path stroke="#c42a35" stroke-opacity="0.85" stroke-width="1.1" d="M48.8 624.6L55.6 617.8L59.0 621.2L64.9 633.4L72.6 633.4L75.9 631.8L82.7 624.6L87.8 627.5L91.2 624.6L94.1 625.8L98.0 633.9L103.0 629.2L106.4 628.4L109.0 629.2L112.4 623.3L114.9 626.2L120.0 639.0L124.2 636.4L128.4 623.3L131.8 624.6L138.6 610.2L142.8 619.5L148.0 618.2L150.5 617.4L159.0 621.2L162.4 627.1L165.4 640.2L167.5 625.4L173.4 645.3L177.2 628.8L179.8 641.5L184.4 622.9L191.2 641.5L195.4 640.6L198.4 630.5L202.6 659.3L204.5 655.0L206.4 654.2L209.0 639.8L212.4 628.8L218.3 620.7L222.5 639.4L225.9 632.6L229.3 634.7L232.7 633.0L236.1 635.6L240.3 621.2L243.3 643.2L248.0 637.7L251.4 641.6L254.8 616.0L257.7 626.6L265.4 643.0L268.3 635.3L271.2 642.1L273.6 631.4L276.0 644.0L279.0 637.2L282.3 654.1L286.7 624.7L289.6 625.6L291.0 617.9L293.5 633.4L295.9 621.8L298.3 643.0L302.2 646.9L305.1 636.3L307.2 637.3L309.2 639.9L311.3 648.8L313.0 640.3L314.7 634.3L317.6 645.9L319.6 634.5L321.5 631.4L323.4 657.5L326.3 630.5L329.2 635.3L330.9 638.8L332.6 652.7L335.5 627.6L338.2 626.0L339.4 589.8L340.6 626.0L341.8 645.0L344.7 639.2L346.4 630.5L348.0 624.1L350.9 640.0L353.8 635.0L356.0 635.7L358.2 626.3L360.1 633.8L362.1 637.3L364.0 638.0L365.9 635.1L367.9 639.3L369.8 639.3L372.0 645.4L374.1 656.8L376.3 640.5L378.5 632.0L380.6 639.7L382.8 656.8L385.0 641.7L387.2 633.5L389.4 635.7L391.5 627.7L394.6 600.0L395.6 550.5L396.6 600.0L398.1 643.7L403.2 632.0L405.4 647.6L407.5 655.3L410.4 626.3L412.5 633.6L414.7 633.5L416.2 642.4L417.6 640.5L419.1 649.5L421.0 640.9L423.0 638.4L424.9 630.6L426.7 631.8L428.5 631.6L430.4 630.3L432.2 624.1L434.4 624.6L436.5 635.0L438.4 642.6L440.4 649.7L442.3 653.9L444.5 643.0L446.7 632.0"/>
<path stroke="#c42a35" stroke-opacity="0.85" stroke-width="1.2" d="M446.7 632.0L449.0 623.4L449.2 582.5L449.7 650.1L450.4 656.1L451.0 633.2L451.6 634.6L452.3 651.6L452.8 647.9L453.5 639.3L454.2 641.0L454.9 627.7L455.6 644.1L456.2 627.4L456.8 672.3L457.4 618.1L458.1 630.2L458.7 658.6L459.4 652.5L460.0 629.7L460.6 653.2L461.4 648.8L462.0 645.3L462.8 650.3L463.5 648.7L464.1 629.5L464.6 647.5L465.3 620.6L466.0 650.2L466.6 647.3L467.1 649.5L468.0 641.9L468.5 647.7L469.2 636.6L469.8 658.8L470.4 635.9L471.0 621.8L471.6 640.0L472.2 636.8L473.0 633.3L473.7 650.6L474.5 668.6L475.2 644.9L476.0 631.6L476.8 629.5L477.6 624.7L478.4 626.5L479.1 635.9L479.8 614.8L480.5 632.9L481.2 657.1L481.9 640.4L482.5 635.9L483.3 646.2L484.0 650.8L484.7 644.6L485.4 629.0L486.2 626.0L486.8 627.7L487.5 646.3L488.1 640.0L488.7 645.0L489.4 658.1L489.9 626.9L490.6 669.5L491.1 642.4L491.6 653.0L492.3 628.9L493.0 633.4L493.6 632.4L494.1 647.2L494.7 642.7L495.5 626.0L496.2 635.5L496.9 625.7L497.6 634.6L498.2 635.0L498.9 617.7L499.6 644.8L500.4 625.1L501.0 640.3L501.5 630.0L502.0 652.5L502.5 627.5L503.2 621.3L503.7 645.8L504.4 627.3L505.0 646.5L505.7 619.3L506.4 637.5L507.0 638.1L507.6 637.7L508.2 633.4L508.8 646.5L509.4 628.5L510.1 639.3L510.8 624.1L511.2 650.4L511.8 655.1L512.5 647.2L513.0 643.2L513.6 637.7L514.2 627.0L514.8 627.7L515.5 623.6L516.3 625.2L516.7 646.9L517.2 629.5L517.2 581.2L517.7 670.1L518.2 619.3L518.7 639.9L519.4 648.3L519.8 637.5L520.3 651.4L521.0 621.1L521.8 644.6L522.3 636.3L522.8 650.2L523.4 649.6L523.9 604.8L524.5 635.3L525.1 617.1L525.8 631.2L526.4 624.6L527.1 630.4L527.7 631.4L528.3 672.9L528.9 634.0L529.4 638.8L530.0 632.8L530.6 618.0L531.3 661.4L531.8 642.2L532.5 619.3L533.0 628.7L533.5 662.3L534.2 650.9L534.8 637.7L535.3 643.5L535.8 646.0L536.5 644.6L536.9 642.8L537.6 633.0L538.3 641.7L538.8 618.6L539.5 617.7L540.2 636.7L540.7 649.3L541.2 641.1L541.7 629.9L542.3 631.6L542.8 629.7L543.3 644.4L543.9 630.8L544.4 623.4L545.1 662.5L545.6 635.7L545.9 592.2L546.0 638.1L546.6 648.9L547.1 658.1L547.6 630.2L548.1 643.1L548.6 644.7L549.1 641.8L549.7 657.6L550.1 633.3L550.6 628.8L551.2 658.2L551.8 645.5L552.4 644.3L553.0 623.5L553.5 628.1L554.0 647.3L554.5 643.1L555.0 629.1L555.6 650.5L556.2 623.4L556.8 619.2L557.3 629.0L558.0 658.0L558.6 652.4L559.2 633.5L559.8 642.7L560.3 640.2L560.9 623.4L561.4 626.7L562.0 620.1L562.6 628.9L563.1 643.0L563.8 642.1L564.3 660.1L564.8 630.0L565.3 637.0L565.9 663.0L566.4 636.6L566.8 648.9L567.4 628.3L568.0 623.4L568.4 640.5L568.9 628.9L569.4 646.5L570.1 632.4L570.6 632.3L571.2 651.0L571.6 635.1L572.3 652.1L572.9 627.0L573.5 658.2L573.9 620.3L574.5 627.6L575.0 624.5L575.4 651.7L576.1 643.6L576.5 643.8L577.1 655.1L577.8 672.5L578.2 632.7L578.8 629.0L579.2 635.4L579.7 645.3L580.3 648.1L580.8 632.0L581.3 626.4L581.7 650.5L582.2 656.6L582.6 651.4L583.0 639.8L583.6 643.1L584.1 642.0L584.7 634.3L585.2 669.4L585.8 655.3L586.4 651.7L586.9 644.1L587.5 615.8L588.0 649.7L588.6 633.8L589.1 644.8L589.7 653.9L590.3 638.6L590.9 639.6L591.5 654.0L592.1 647.9L592.6 627.8L593.0 667.5L593.7 635.1L594.2 628.8L594.6 652.7L595.1 637.7L595.6 638.3L596.0 635.8L596.5 635.7L597.0 640.6L597.7 642.6L598.2 639.3L598.7 645.1L599.1 631.7L599.6 631.3L600.0 640.2L600.5 639.3L600.9 644.5L601.3 634.1L601.9 648.7L602.5 656.0L603.1 620.5L603.5 647.1L603.8 642.9L604.3 635.2L604.9 621.9L605.5 640.2L606.1 625.7L606.6 642.5L607.2 650.1L607.8 662.8L608.1 577.7L608.3 632.4L608.7 641.7L609.1 649.5L609.5 651.3L610.1 625.0L610.6 650.2L611.1 656.9L611.8 639.2L612.1 635.6L612.7 658.2L613.1 650.4L613.7 615.1L614.3 640.4L614.7 644.1L615.2 640.2L615.8 620.4L616.2 630.2L616.7 629.5L617.2 648.8L617.7 640.8L618.3 650.8L618.7 642.1L619.2 658.8L619.8 629.3"/>
<path stroke="#c42a35" stroke-opacity="0.85" stroke-width="1.35" d="M619.8 629.3L620.2 650.8L620.6 647.2L621.1 651.2L621.6 627.6L622.1 644.0L622.5 618.2L623.1 615.4L623.6 665.6L624.0 642.9L624.4 630.5L625.0 648.7L625.4 644.0L625.8 663.9L626.3 634.2L626.8 624.8L627.3 643.5L627.8 647.9L628.3 650.5L628.8 613.4L629.3 625.6L629.7 632.4L630.1 650.3L630.7 631.8L631.1 622.6L631.6 622.9L632.0 645.2L632.6 639.3L633.0 664.1L633.4 638.8L633.8 633.6L634.3 651.8L634.8 644.4L635.2 645.2L635.6 638.0L636.1 618.1L636.7 634.2L637.3 626.3L637.7 640.6L638.1 646.7L638.2 556.0L638.5 651.6L639.0 647.6L639.5 632.9L640.0 632.5L640.4 661.3L640.9 645.3L641.3 670.0L641.8 650.6L642.2 644.2L642.7 635.7L643.2 646.9L643.8 626.8L644.1 645.8L644.6 615.9L645.0 631.7L645.4 643.3L645.9 638.2L646.5 617.7L647.0 633.1L647.6 652.1L648.0 644.0L648.5 648.4L648.9 645.4L649.2 658.5L649.8 630.1L650.2 625.6L650.6 629.1L651.0 633.2L651.4 627.0L652.0 632.7L652.5 654.2L652.9 632.9L653.2 618.0L653.2 605.0L653.6 635.6L654.1 662.4L654.6 653.9L655.1 612.3L655.4 643.9L655.8 646.7L656.3 616.4L656.7 628.9L657.1 653.0L657.5 640.3L657.8 638.6L658.2 644.2L658.6 663.6L659.1 658.3L659.6 641.1L660.1 626.9L660.5 647.0L661.1 642.1L661.6 630.1L662.0 654.2L662.5 673.0L662.9 619.4L663.4 643.3L663.9 615.3L664.3 632.8L664.7 623.6L665.1 644.2L665.6 644.6L666.0 622.0L666.4 632.3L666.9 632.2L667.2 673.1L667.7 643.3L668.2 645.6L668.7 642.5L669.3 632.8L669.7 620.4L670.1 652.9L670.4 636.1L670.8 626.3L671.3 655.2L671.8 634.3L672.2 644.1L672.7 640.7L673.1 621.7L673.5 631.5L673.9 643.3L674.4 641.0L674.8 621.2L675.3 612.7L675.7 648.1L676.2 625.8L676.5 659.0L677.0 648.4L677.5 638.9L678.0 628.5L678.4 666.4L678.9 654.5L679.4 659.2L680.0 625.2L680.4 642.6L680.8 645.6L681.2 651.1L681.5 654.2L681.9 644.6L682.2 631.6L682.6 653.1L683.1 643.1L683.5 644.9L684.0 646.9L684.5 633.9L685.0 622.5L685.4 641.8L685.8 646.6L686.3 633.8L686.6 623.8L687.0 637.3L687.5 657.5L687.9 634.2L688.3 668.8L688.7 641.5L689.1 617.8L689.6 614.3L690.1 660.0L690.5 649.5L691.1 648.4L691.5 630.0L691.9 648.1L692.4 654.9L692.8 620.5L693.3 668.7L693.8 646.4L694.2 654.2L694.5 641.5L694.9 642.0L695.3 626.5L695.7 628.4L696.1 625.8L696.6 641.7L697.1 652.5L697.5 666.4L698.1 663.1L698.5 657.1L699.0 634.9L699.5 640.9L700.0 644.6L700.3 641.5L700.7 662.6L701.2 639.1L701.6 648.8L702.0 642.4L702.4 618.2L702.7 644.5L703.2 644.8L703.6 640.4L704.1 661.0L704.5 626.0L704.9 658.0L705.4 626.7L705.9 661.5L706.3 638.9L706.8 637.3L707.3 638.8L707.7 622.7L708.0 631.0L708.4 655.2L708.8 630.2L709.1 603.4L709.3 655.6L709.6 638.6L710.1 639.6L710.6 641.8L710.9 643.5L711.4 644.0L711.9 652.2L712.3 649.0L712.7 644.0L713.2 627.3L713.6 616.8L713.9 638.1L714.3 644.3L714.8 638.7L715.3 641.5L715.6 630.2L716.1 638.4L716.5 647.4L717.0 629.9L717.4 636.8L717.7 623.9L718.2 635.4L718.7 632.1L719.0 648.7L719.4 645.5L719.8 646.8L720.2 626.8L720.7 631.8L721.1 630.1L721.5 644.8L721.9 644.6L722.4 638.6L722.8 656.0L723.3 636.6L723.6 640.5L724.0 626.1L724.3 615.6L724.8 640.4L725.1 640.3L725.5 642.1L725.9 641.6L726.3 654.2L726.7 621.0L727.2 626.2L727.7 637.6L728.1 621.5L728.4 666.6L728.8 669.0L729.1 640.5L729.5 673.7L729.8 627.5L730.2 643.8L730.7 640.3L731.0 649.2L731.5 650.9L731.9 628.8L732.4 648.5L732.9 650.7L733.2 629.5L733.7 648.9L734.0 644.7L734.4 644.3L734.7 645.7L735.2 644.9L735.6 673.7L736.0 646.1L736.1 585.0L736.4 618.9L736.9 653.9L737.3 619.0L737.8 620.1L738.1 588.2L738.2 643.8L738.7 659.3L739.0 645.2L739.4 630.8L739.8 619.2L740.1 622.2L740.5 653.1L740.9 642.5L741.3 651.3L741.8 617.5L742.2 661.4L742.6 649.2L743.1 642.4L743.4 671.2L743.8 636.6L744.2 648.0L744.6 642.5L745.0 624.7L745.5 625.0L746.0 648.3L746.3 639.9L746.7 645.6L747.1 641.0L747.5 648.1L747.9 658.0L748.3 617.7L748.7 644.2L749.0 648.7L749.5 639.3L750.0 647.4L750.5 640.3L750.8 616.3L751.3 633.0L751.7 630.4L752.1 669.7L752.5 637.1L753.0 661.0L753.4 625.6L753.8 631.1L754.3 637.5L754.6 629.9L755.1 636.0L755.5 642.7L755.8 630.0L756.3 646.7L756.6 634.1L757.1 623.2L757.5 618.7L757.9 646.2L758.3 640.2L758.7 630.5L759.1 647.6L759.4 620.1L759.8 649.6L759.9 600.3"/>
<path stroke="#c42a35" stroke-opacity="0.85" stroke-width="1.5" d="M759.9 600.3L760.2 618.8L760.7 635.9L761.2 623.9L761.6 641.6L762.0 648.2L762.2 591.3L762.4 633.5L762.8 643.4L763.1 624.7L763.4 661.0L763.8 638.7L764.3 634.3L764.7 655.1L765.0 640.7L765.4 644.4L765.8 646.8L766.3 654.7L766.8 644.4L767.3 633.3L767.7 643.0L768.0 647.2L768.5 625.2L768.8 616.7L769.3 631.9L769.7 635.4L770.1 650.1L770.5 646.0L771.0 630.8L771.3 636.7L771.8 661.8L772.2 644.6L772.6 631.7L773.0 639.3L773.4 615.6L773.8 648.3L774.2 652.9L774.6 647.8L775.1 644.3L775.4 639.0L775.9 659.9L776.3 628.0L776.6 648.5L776.9 654.0L777.3 649.2L777.6 657.2L778.1 633.9L778.4 650.8L778.8 635.2L779.1 642.4L779.6 614.5L779.9 653.9L780.4 643.7L780.9 652.8L781.2 635.0L781.7 649.1L782.1 661.6L782.6 658.0L782.9 637.8L783.3 659.7L783.7 653.2L784.2 647.9L784.6 644.8L784.9 648.1L785.3 650.0L785.7 643.1L786.1 634.1L786.5 644.3L786.9 629.9L787.4 649.6L787.7 648.1L788.0 634.4L788.4 644.7L788.8 622.8L789.3 662.1L789.7 642.9L790.1 615.4L790.4 654.7L790.7 643.7L791.1 652.8L791.5 650.7L791.9 640.6L792.3 672.9L792.6 646.5L793.1 640.2L793.4 631.3L793.7 654.7L794.0 667.9L794.5 648.3L794.8 621.4L795.1 640.8L795.5 633.2L795.9 651.5L796.4 660.3L796.7 616.1L797.1 637.7L797.5 645.2L797.9 665.8L798.2 647.1L798.7 642.2L799.1 638.2L799.6 667.1L799.9 637.2L800.3 663.5L800.8 652.5L801.1 623.8L801.4 622.9L801.7 655.5L802.0 653.2L802.3 639.3L802.7 641.8L803.0 636.7L803.3 645.0L803.6 620.6L804.1 623.5L804.4 649.3L804.8 652.3L805.2 656.8L805.6 645.9L806.0 639.0L806.1 543.8L806.5 635.8L806.9 639.6L807.3 630.9L807.6 652.1L808.0 649.1L808.3 635.6L808.6 637.9L808.9 673.8L809.4 637.4L809.7 626.7L810.2 643.9L810.5 634.6L810.8 651.6L811.2 653.3L811.6 635.0L812.0 660.7L812.4 640.3L812.8 646.2L813.1 649.1L813.4 641.4L813.9 647.2L814.3 638.9L814.7 648.3L815.2 674.7L815.5 642.0L815.9 663.0L816.3 648.3L816.7 645.1L817.1 590.4L817.1 642.8L817.5 604.8L817.8 633.5L818.2 643.8L818.5 651.2L818.8 655.6L819.1 661.8L819.5 638.0L819.8 620.0L820.2 657.9L820.6 651.5L820.9 647.9L821.3 660.7L821.8 647.3L822.2 665.7L822.4 583.7L822.6 620.1L823.0 647.4L823.3 646.8L823.7 643.4L824.0 659.8L824.4 635.9L824.7 655.9L825.1 631.0L825.5 644.9L825.9 646.0L826.3 647.8L826.7 645.5L827.1 648.2L827.5 622.1L827.8 624.6L828.1 650.8L828.6 651.9L828.9 645.4L829.2 647.2L829.5 657.7L829.9 638.4L830.2 646.4L830.7 626.1L831.1 659.1L831.1 595.7L831.4 658.1L831.8 624.3L832.2 643.3L832.6 635.5L833.0 634.6L833.4 658.9L833.7 666.5L834.0 639.8L834.3 632.0L834.8 658.8L835.2 662.4L835.6 641.8L835.9 644.3L836.2 655.6L836.6 627.9L836.9 616.5L837.1 575.7L837.2 621.3L837.6 655.5L838.0 656.1L838.3 633.3L838.8 643.5L839.1 633.7L839.4 638.0L839.8 644.7L840.1 668.5L840.5 644.7L840.9 626.4L841.2 650.8L841.6 628.9L841.9 648.1L842.3 630.0L842.6 638.4L843.0 623.2L843.1 591.7L843.3 628.7L843.7 652.0L844.1 664.2L844.5 620.8L844.8 627.7L845.2 645.3L845.2 582.4L845.5 645.3L845.9 649.3L846.2 642.1L846.5 646.9L846.8 644.8L847.1 670.5L847.4 643.0L847.8 630.1L848.2 635.4L848.6 641.7L849.0 627.7L849.4 664.4L849.7 654.0L850.1 643.1L850.4 586.4L850.5 675.2L850.8 630.8L851.1 632.9L851.4 667.7L851.8 648.7L852.2 649.3L852.6 657.3L853.0 621.0L853.4 651.0L853.7 638.3L854.1 610.8L854.4 627.7L854.6 651.8L855.1 651.5L855.5 632.2L855.9 642.6L856.3 655.1L856.8 653.6L857.2 627.3L857.6 640.9L858.1 626.1L858.5 613.1L858.8 634.6L859.1 638.5L859.5 652.1L859.9 657.8L860.2 644.5L860.5 623.3L860.9 638.2L861.3 637.4L861.5 636.6L862.0 629.4L862.4 644.0L862.7 626.5L863.1 647.9L863.4 40.0L863.5 627.0L863.9 624.3L864.2 674.7L864.7 646.5L864.9 646.8L865.3 647.3L865.8 651.3L866.0 648.8L866.4 642.1L866.7 648.3L867.1 626.2L867.5 664.7L867.9 654.6L868.3 656.0L868.7 644.5L869.0 650.0L869.4 647.9L869.7 624.8L870.2 659.5L870.6 662.8L870.8 675.3L871.3 628.8L871.6 645.3L871.9 635.3L872.2 647.7L872.6 642.0L872.9 647.1L873.3 644.6L873.7 639.2L874.0 654.8L874.2 564.6L874.4 618.1L874.7 655.2L875.0 648.2L875.5 639.8L875.8 626.4L876.1 633.1L876.5 622.8L876.9 640.8L877.3 660.3L877.7 646.5L878.0 636.2L878.3 641.4L878.7 650.7L879.1 630.3L879.4 634.6L879.7 649.3L880.1 645.3L880.4 627.1L880.8 654.0L880.9 593.8L881.2 618.5L881.5 638.5L881.9 656.0L882.1 629.6L882.6 654.5L882.9 635.2L883.3 627.8L883.7 628.7L884.0 613.7L884.3 617.2L884.7 649.7L885.1 619.3L885.5 662.4L885.8 628.7L886.2 644.8L886.5 645.6L886.8 642.8L887.0 646.5L887.4 654.7L887.7 636.8L888.1 664.7L888.5 650.2L888.8 621.3L889.1 650.5L889.5 623.7L889.9 622.9L890.3 649.2L890.7 635.3L891.1 639.6L891.4 635.2L891.7 636.8L892.1 649.8L892.4 627.7L892.8 637.8L893.2 648.4L893.5 633.4L893.8 669.3L894.2 638.6L894.6 641.0L894.9 624.6L895.3 642.6L895.7 660.2L896.0 648.4L896.3 642.9L896.6 638.3L897.0 652.1L897.3 638.1L897.7 630.6L898.0 653.4L898.5 609.4L898.9 644.5L899.2 630.4L899.6 637.3L899.9 659.7L900.3 616.6L900.7 647.2L900.9 625.2L901.2 659.9L901.7 622.9L902.0 654.6L902.3 657.8L902.7 629.9L903.0 578.4L903.0 639.0L903.4 665.4L903.7 642.5L904.0 638.9L904.3 629.7L904.8 641.4L905.1 645.2L905.5 650.2L905.9 640.0L906.1 552.3L906.2 619.1L906.6 674.4L906.9 626.6L907.2 672.4L907.5 674.7L907.8 626.4L908.2 651.2L908.5 645.9L908.9 629.2L909.2 638.5L909.5 651.7L909.8 608.9L910.2 643.2L910.5 658.7L910.7 653.1L911.0 655.6L911.4 645.0L911.8 630.2L912.1 629.0L912.4 649.6L912.9 619.5L913.2 646.2L913.5 634.9L913.8 642.1L914.2 643.2L914.5 632.5L914.8 635.1L915.1 658.6L915.5 652.6L915.8 633.0L916.1 650.1L916.5 615.0L916.9 637.2L917.2 631.1L917.5 638.9L917.8 652.4L918.2 637.4L918.5 627.1L918.9 627.9L919.3 651.0L919.6 636.7L919.9 651.3L920.2 648.6L920.5 637.5L920.9 633.2L921.4 636.7L921.7 641.1L922.0 646.4L922.4 620.2L922.8 627.9L923.2 664.0L923.6 654.1L923.9 659.5L924.3 656.1L924.6 639.7L925.0 633.3L925.4 624.2L925.7 635.4L926.0 652.8L926.4 641.4L926.7 647.7L927.1 654.1L927.3 646.3L927.7 649.7L928.2 651.3L928.6 636.1L928.9 646.1L929.2 659.7L929.6 645.7L930.0 627.0L930.4 639.5L930.7 647.9L931.0 631.4L931.3 655.8L931.7 646.1L932.1 644.5L932.5 648.0L932.9 618.8L933.3 635.6L933.5 664.1L933.8 647.9L934.2 629.9L934.6 661.1L934.9 642.9L935.2 646.8L935.5 579.7L935.6 642.1L935.9 619.7L936.3 639.1L936.7 645.4L937.0 664.8L937.4 645.7L937.8 647.7L938.0 624.5L938.4 635.3L938.7 646.3L939.0 652.8L939.4 664.2L939.7 633.5L940.1 630.8L940.5 647.9L940.8 645.1L941.2 634.8L941.4 638.5L941.8 654.2L942.1 667.1L942.4 654.2L942.8 645.1L943.1 649.3L943.4 651.1L943.8 620.6L944.2 632.4L944.5 632.0L944.8 654.4L945.2 661.7L945.6 630.9L945.9 652.0L946.2 634.3L946.4 630.5L946.8 616.0L947.1 629.5L947.5 640.9L947.8 627.4L948.2 645.1L948.5 639.9L948.9 624.4L949.3 638.3L949.7 631.4L950.0 652.6L950.3 641.6L950.6 631.7L951.0 629.1L951.3 653.1L951.6 643.6L951.9 662.2L952.3 642.0L952.6 645.0L952.9 651.0L953.3 632.6L953.7 611.6L954.1 648.4L954.4 655.0L954.7 642.7L955.0 647.4L955.4 651.6L955.7 615.4L956.0 670.9L956.4 661.3L956.7 618.9L957.1 643.9L957.4 641.0L957.7 656.1L958.0 618.4L958.1 548.6L958.3 652.6L958.6 639.5L958.9 635.0L959.3 648.1L959.7 638.1L960.0 642.2L960.3 642.8L960.6 635.6L961.0 655.2L961.2 621.3L961.5 654.0L961.8 656.4L962.1 637.3L962.4 625.8L962.7 638.6L963.1 640.7L963.3 660.6L963.7 618.5L964.1 675.0L964.4 660.8L964.7 646.6L965.1 648.2L965.2 585.8L965.5 631.3L965.8 658.3L966.2 628.6L966.6 634.8L966.9 639.7L967.3 618.7L967.6 649.4L968.0 636.4L968.3 645.2L968.6 660.2L969.0 644.2L969.3 646.1L969.7 604.4L970.0 654.3L970.4 623.3L970.7 620.4L971.0 615.9L971.4 651.6L971.8 614.0L972.0 563.8L972.1 650.5L972.4 655.1L972.7 656.9L973.1 612.6L973.4 671.2L973.8 648.6L974.2 617.0L974.5 616.0L974.8 636.4L975.1 633.1L975.4 660.0L975.7 655.6L976.1 657.5L976.4 639.5L976.8 656.9L977.1 652.6L977.5 649.8L977.8 664.1L978.1 634.0L978.4 549.7L978.4 642.2L978.7 620.0L979.1 649.4L979.4 652.8L979.8 645.4L980.1 633.1L980.4 644.9L980.7 666.9L981.0 652.5L981.3 622.0L981.6 626.9L982.0 673.0L982.3 674.1L982.7 651.9L983.1 652.8L983.4 632.5L983.7 637.7L984.0 645.1L984.4 652.0L984.8 637.7L985.0 493.3L985.2 636.4L985.5 619.9L985.8 620.6L986.2 654.9L986.5 649.0L986.8 645.3L987.0 650.2L987.3 657.6L987.6 647.0L988.0 661.5L988.4 643.7L988.8 616.0L989.1 641.3L989.5 629.9L989.9 634.1L990.1 630.0L990.2 565.6L990.5 628.2L990.8 645.7L991.2 654.0L991.5 631.5L991.9 613.1L992.3 632.1L992.6 648.0L992.9 649.0L993.3 655.8L993.6 645.0L993.9 664.5L994.2 628.6L994.5 660.0L994.8 634.6L995.2 637.7L995.5 667.7L995.8 623.6L995.9 570.4L996.2 650.8L996.5 640.1L996.9 625.4L997.3 638.1L997.6 659.4L998.0 621.1L998.2 653.1L998.6 654.6L998.9 629.9L999.3 636.2L999.7 650.0L1000.0 646.8L1000.7 614.9L1001.5 665.2L1002.5 609.6L1003.3 663.4L1004.2 619.3L1004.4 561.9L1005.0 669.9L1006.2 621.5L1007.1 557.7L1007.5 668.4L1008.6 636.9L1009.5 666.7L1010.7 585.9L1011.7 662.7L1012.4 599.7L1012.5 634.9L1013.4 666.4L1014.6 623.1L1015.8 664.4L1016.7 620.0L1017.8 664.0L1019.0 617.9L1020.0 663.9L1021.2 591.7L1022.4 667.3L1023.0 593.8L1023.6 595.7L1024.5 663.3L1025.7 598.7L1026.8 664.5L1027.4 593.8L1027.9 622.0L1028.8 665.0L1030.0 622.4L1031.0 664.0L1032.1 619.7L1033.0 664.9L1034.0 613.0L1035.0 664.7L1036.3 613.0L1037.3 665.3L1038.4 606.4L1038.9 543.8L1039.4 673.1L1040.4 598.0L1041.5 670.8L1042.3 622.8L1042.8 578.4L1043.6 664.3L1044.5 630.9L1045.8 668.7L1046.7 613.7L1047.9 664.4L1049.1 596.7L1050.1 667.5L1051.4 633.3L1052.2 539.8L1052.5 668.7L1053.4 620.6L1054.6 665.8L1055.8 616.6L1056.2 534.5L1056.7 667.2L1057.8 617.0L1059.0 670.4L1059.8 575.0L1060.2 564.6L1060.8 663.5L1061.7 624.8L1063.0 665.1L1063.8 574.2L1064.9 664.1L1065.9 607.2L1066.9 667.6L1067.9 607.5L1069.2 665.7L1070.1 631.0L1070.8 553.9L1071.2 667.1L1072.5 573.9L1073.6 664.6L1074.8 594.1L1075.9 669.1L1076.8 600.4L1077.8 664.9L1078.8 605.3L1079.6 590.4L1079.9 674.9L1081.0 596.3L1082.1 672.8L1083.0 616.4L1083.9 668.8L1084.9 605.1L1086.0 664.0L1087.0 617.5L1088.3 664.1L1089.4 617.7L1090.6 665.6L1091.6 597.7L1092.7 665.8L1093.4 551.3L1093.9 599.5L1095.3 665.8L1096.1 585.0L1096.2 602.0L1097.1 665.5L1098.0 573.4L1098.9 666.9L1100.1 596.9L1101.3 666.5L1102.2 541.7L1102.6 599.1L1103.9 666.4L1105.0 623.1L1105.8 528.4L1106.2 669.9L1107.1 573.8L1108.4 666.3L1109.2 605.2L1110.3 664.7L1111.1 616.9L1112.0 670.6L1113.3 584.7L1114.4 670.8L1115.4 573.5L1116.3 667.6L1117.5 565.6L1118.8 668.3L1119.9 623.7L1120.9 669.3L1122.0 581.2L1123.0 670.9L1124.2 605.6L1125.2 664.7L1125.3 587.7L1126.2 616.9L1127.2 670.1L1128.1 585.9L1128.9 671.4L1130.1 594.2L1131.3 680.4L1132.4 601.6L1133.4 672.7L1134.3 548.4L1134.6 628.0L1135.5 665.1L1136.4 592.0L1137.3 670.3L1138.2 597.4L1139.5 669.9L1140.1 548.4L1140.4 602.8L1141.6 672.9L1142.6 599.9L1143.9 665.5L1144.9 511.2L1145.8 667.7L1147.0 561.7L1148.2 671.0L1149.2 569.4L1150.3 666.0L1151.4 625.4L1152.6 665.4L1154.0 613.7L1155.0 666.7L1155.2 560.6L1155.8 594.3L1156.9 665.0L1158.0 586.4L1159.1 666.8L1159.9 597.2L1160.9 669.0L1161.7 599.4L1162.7 671.2L1164.0 592.3L1165.3 666.3L1166.4 602.7L1167.7 671.4L1168.6 552.8L1169.0 597.1L1170.3 671.9L1171.3 586.3L1172.2 671.9L1173.1 600.4L1174.2 665.0L1174.4 551.3L1175.4 599.3L1176.4 505.4L1176.6 668.4L1177.7 586.0L1178.6 665.9L1179.5 588.5L1180.3 665.9L1181.4 582.3L1182.7 665.8L1184.0 571.1L1184.8 667.6L1185.7 566.4L1186.8 665.3L1187.7 615.8L1188.9 668.4L1190.3 579.9L1191.6 666.5L1192.5 621.4L1193.4 666.4L1194.6 597.1L1195.8 669.3L1196.7 593.5L1196.8 548.4L1197.9 668.0L1199.0 614.0L1199.9 665.7L1200.8 591.9L1201.9 666.8L1202.9 615.2L1203.9 668.4L1204.8 576.9L1206.1 666.4L1207.4 596.2L1208.7 667.9L1209.9 599.0L1211.3 681.5L1212.3 626.9L1213.5 671.5L1214.6 598.2L1216.0 666.0L1217.1 597.4L1218.1 673.7L1219.0 592.8L1220.0 560.6L1220.3 672.7L1221.2 582.8L1222.4 667.2L1223.6 581.8L1224.6 667.7L1225.8 572.2L1227.1 671.8L1228.2 569.9L1229.3 669.9L1230.5 605.9L1231.5 667.5L1232.8 578.8L1234.0 667.2L1235.4 627.4L1236.5 668.3L1237.8 586.9L1238.8 670.8L1239.6 594.7L1241.0 666.4L1242.1 591.7L1243.1 666.4L1243.9 593.3L1245.1 666.0L1246.1 578.0L1247.0 557.7L1247.2 669.7L1248.3 589.2L1249.4 670.3L1250.4 622.0L1251.6 675.2L1252.9 554.9L1254.2 669.7L1255.5 590.0L1256.7 674.6L1257.9 603.2L1259.2 671.2L1260.2 565.8L1261.4 666.4L1262.7 619.1L1264.0 669.7L1265.4 615.8L1266.2 509.2L1266.7 667.3L1267.6 591.6L1268.9 667.4L1269.7 582.7L1271.0 666.9L1272.3 593.2L1273.2 668.0L1274.5 593.8L1275.6 670.7L1276.6 579.2L1277.6 666.9L1279.0 578.7L1280.1 670.7L1281.3 594.3L1282.4 493.4L1283.7 587.5L1285.0 669.0L1285.9 589.7L1286.7 673.7L1287.8 585.3L1288.9 668.7L1290.2 607.4L1291.2 668.6L1292.3 600.2L1293.5 666.7L1294.6 564.5L1295.6 667.0L1296.3 551.5L1296.5 619.6L1297.5 667.7L1298.6 550.9L1299.8 671.2L1300.8 560.9L1302.0 670.7L1303.3 599.5L1304.6 669.8L1305.9 585.2L1306.8 667.0L1307.7 582.2L1308.5 668.2L1309.7 582.0L1310.7 668.3L1311.3 513.3L1311.5 582.4L1312.6 667.0L1313.5 575.3L1314.8 669.2L1316.1 550.6L1317.1 668.5L1318.2 575.5L1319.3 667.9L1320.6 590.6L1321.8 668.8L1322.9 607.5L1324.2 670.5L1325.5 619.5L1326.7 675.3L1327.6 621.5L1328.9 669.6L1330.0 589.0L1331.2 673.7L1332.3 596.3L1333.6 669.1L1335.0 621.2L1336.1 667.5L1336.3 544.2L1337.0 571.4L1338.1 668.2L1338.9 624.9L1340.1 670.2L1341.3 577.2L1342.4 667.5L1343.6 622.2L1344.6 667.5L1345.4 593.1L1346.4 671.2L1347.4 555.1L1348.8 668.6L1349.9 580.3L1350.9 670.0L1352.0 580.2L1353.0 671.1L1354.2 554.4L1355.2 672.9L1356.1 591.1L1357.0 667.9L1358.2 576.8L1358.4 503.7L1359.4 671.2L1360.3 585.3L1361.2 668.7L1362.0 578.3L1362.9 671.4L1363.7 579.5L1364.7 667.8L1365.7 616.3L1366.9 672.1L1368.2 598.0L1368.9 516.9L1369.4 669.1L1370.4 624.4L1371.2 669.3L1372.4 590.7L1373.5 668.5L1374.3 555.6L1375.4 671.0L1376.5 563.9L1377.5 669.8L1378.3 597.9L1379.0 520.6L1379.5 672.6L1380.7 582.3L1381.8 669.9L1383.1 591.1L1384.0 671.2L1385.0 590.0L1386.0 668.8L1387.2 586.6L1388.2 668.9L1388.4 548.0L1389.2 580.7L1390.0 669.4L1390.9 584.1L1392.1 675.9L1392.9 588.7L1394.1 672.1L1395.0 616.9L1395.9 493.6L1396.0 671.1L1397.3 553.6L1398.6 682.5L1399.1 589.6L1399.6 676.8L1400.8 680.8L1401.3 579.9L1401.8 682.6L1402.9 688.5L1403.4 598.0L1404.0 693.3L1404.2 502.6L1405.0 692.9L1405.5 613.2L1406.0 697.5L1407.2 693.8L1407.7 606.5L1408.3 695.0L1409.5 704.8L1410.1 599.0L1410.6 684.2L1412.1 704.7L1412.6 567.3L1413.1 703.9L1414.8 712.2L1415.3 594.1L1415.9 707.6L1417.3 712.1L1417.9 587.0L1418.4 713.1L1419.4 681.7L1420.0 589.2L1420.5 712.4L1421.0 560.0L1421.8 712.2L1422.3 585.2L1422.9 712.8L1423.8 720.2L1424.3 575.6L1424.9 714.0L1426.2 712.0L1426.7 598.9L1426.8 537.5L1427.3 715.7L1428.3 713.2L1428.9 595.9L1429.4 717.3L1430.8 719.9L1431.4 546.1L1431.9 691.6L1433.1 721.8L1433.7 618.7L1434.2 672.0L1435.8 714.2L1436.4 580.6L1436.9 719.2L1438.5 717.8L1439.1 546.1L1439.6 719.2L1440.5 724.0L1441.1 574.9L1441.6 717.8L1442.9 724.9L1443.4 591.7L1444.0 715.2L1445.4 681.6L1445.9 582.1L1446.5 716.1L1447.3 720.8L1447.9 583.5L1448.4 718.0L1449.6 670.4L1450.1 599.2L1450.7 719.1L1452.1 677.0L1452.5 514.2L1452.6 575.6L1453.2 718.4L1454.2 719.5L1454.7 606.3L1455.3 722.0L1456.9 720.5L1457.4 596.6L1458.0 688.6L1459.3 709.8L1459.8 616.6L1460.4 676.8L1461.4 719.6L1462.0 605.6L1462.5 690.5L1463.2 507.3L1463.9 721.8L1464.5 602.4L1465.0 718.1L1465.9 721.8L1466.5 596.9L1467.0 713.0L1468.6 724.0L1469.1 575.6L1469.7 722.0L1470.9 722.0L1471.5 599.9L1472.0 721.4L1473.7 681.2L1474.2 598.1L1474.3 536.2L1474.8 723.0L1476.0 721.3L1476.6 609.3L1477.1 724.0L1478.1 720.9L1478.6 617.8L1479.2 721.4L1479.2 558.3L1480.6 724.9L1481.1 591.4L1481.7 720.5L1482.6 730.6L1483.2 586.5L1483.7 728.2L1484.5 722.6L1485.1 605.6L1485.2 521.3L1485.6 686.2L1487.1 721.1L1487.6 566.8L1488.2 703.9L1489.5 566.7L1490.0 572.4L1490.6 724.9L1491.4 722.0L1492.0 616.8L1492.5 722.1L1493.5 729.9L1494.1 548.7L1494.6 726.5L1496.1 690.0L1496.7 618.4L1497.2 686.2L1498.8 726.0L1499.4 621.0L1499.9 724.2L1501.1 552.5L1501.3 726.0L1501.9 625.2L1502.4 723.6L1503.7 709.0L1504.3 590.6L1504.4 527.5L1504.8 729.6L1506.0 736.5L1506.5 581.5L1507.1 730.1L1508.3 728.8L1508.9 585.0L1509.4 734.6L1511.0 732.7L1511.6 588.8L1512.1 732.1L1512.4 521.7L1513.2 733.8L1513.7 586.7L1514.3 686.7L1515.1 740.3L1515.7 564.7L1516.2 732.7L1517.5 725.7L1517.5 529.3L1518.0 594.5L1518.6 729.6L1519.6 741.8L1520.1 592.5L1520.7 728.3L1522.3 728.2L1522.5 313.3L1522.8 597.8L1523.4 733.2L1524.8 731.3L1525.4 551.4L1525.4 537.7L1525.9 739.3L1526.7 728.0L1527.2 610.2L1527.8 731.1L1529.0 731.4L1529.6 595.5L1530.1 704.1L1530.4 319.3L1531.5 715.7L1532.0 593.1L1532.6 730.7L1532.8 541.3L1533.9 734.5L1534.4 552.0L1535.0 735.1L1536.5 731.7L1537.0 595.5L1537.4 541.6L1537.6 733.8L1538.6 735.6L1539.1 608.8L1539.7 745.0L1540.9 554.7L1541.4 568.0L1542.0 696.7L1543.4 684.3L1544.0 626.8L1544.5 740.2L1545.0 519.9L1545.3 719.6L1545.9 557.3L1546.4 736.2L1547.7 733.2L1548.3 587.1L1548.8 728.6L1550.0 734.2L1550.6 585.1L1551.1 697.4L1551.4 540.7L1552.2 707.0L1552.7 575.6L1553.3 741.6L1554.7 739.0L1555.2 631.6L1555.8 738.7L1556.7 739.3L1557.3 602.0L1557.8 737.1L1558.1 539.5L1558.7 736.0L1559.2 598.1L1559.8 737.9L1561.1 739.5L1561.7 625.1L1562.2 726.3L1562.2 558.9L1563.7 746.8L1564.2 598.3L1564.8 742.6L1565.3 559.8L1566.3 709.8L1566.8 603.3L1567.4 736.6L1568.7 738.8L1569.3 628.3L1569.8 737.9L1570.9 739.4L1571.3 533.5L1571.4 623.4L1572.0 737.6L1573.5 763.7L1574.1 570.0L1574.6 743.0L1576.1 745.3L1576.6 615.7L1576.8 550.7L1577.2 738.2L1578.4 738.8L1578.9 557.0L1579.5 740.5L1580.9 756.9L1581.5 606.7L1582.0 728.9L1583.5 743.5L1584.0 572.4L1584.6 717.7L1585.4 709.7L1585.9 612.1L1586.5 557.6L1587.9 727.5L1588.5 627.0L1589.0 724.1L1590.2 746.8L1590.7 613.8L1591.3 705.8L1592.0 758.6L1592.6 625.4L1593.1 746.0L1594.0 575.2L1594.4 749.6L1595.0 591.2L1595.5 732.0L1597.0 749.0L1597.5 627.3L1598.1 717.5L1598.9 750.9L1599.4 590.7L1600.0 744.7L1601.4 754.5L1602.0 631.6L1602.5 717.8L1604.2 751.8L1604.7 594.0L1605.3 721.4L1606.2 744.5L1606.8 632.0L1607.3 750.1L1608.3 721.2L1608.8 590.3L1609.4 743.5L1609.4 572.5L1610.8 710.6L1611.3 600.6L1611.9 756.8L1612.6 748.9L1613.2 627.5L1613.6 581.5L1613.7 749.1L1614.6 743.3L1615.2 601.4L1615.7 745.4L1617.4 764.4L1617.9 599.5L1618.5 753.7L1619.6 723.1L1620.1 597.7L1620.7 743.9L1621.8 751.4L1622.4 581.1L1622.9 745.7L1624.3 752.6L1624.4 565.2L1624.8 591.4L1625.4 745.2L1626.6 712.1L1627.1 617.2L1627.7 738.0L1628.6 704.3L1629.2 608.2L1629.7 748.0L1631.1 750.0L1631.7 581.0L1632.2 744.8L1633.4 757.6L1634.0 567.3L1634.5 731.2L1635.4 753.1L1636.0 608.6L1636.5 746.7L1638.0 750.7L1638.5 587.5L1639.1 745.6L1640.0 742.3L1640.5 644.4L1641.1 748.1L1642.2 756.9L1642.8 582.1L1643.3 753.5L1644.5 753.8L1645.1 612.5L1645.6 749.2L1645.9 373.2L1647.2 753.8L1647.8 584.6L1648.3 756.0L1649.1 751.2L1649.6 641.9L1650.0 377.4L1650.2 758.2L1651.0 752.7L1651.5 610.1L1652.1 749.1L1652.8 380.0L1653.3 747.0L1653.8 628.3L1654.4 746.0"/>
</g>
<rect x="48.5" y="33.5" width="1605" height="761" fill="none" stroke="#555" stroke-width="1"/>
<text x="44" y="45" font-size="12" text-anchor="end">0</text>
<text x="44" y="89" font-size="12" text-anchor="end">-10</text>
<text x="44" y="132" font-size="12" text-anchor="end">-20</text>
<text x="44" y="175" font-size="12" text-anchor="end">-30</text>
<text x="44" y="218" font-size="12" text-anchor="end">-40</text>
<text x="44" y="262" font-size="12" text-anchor="end">-50</text>
<text x="44" y="305" font-size="12" text-anchor="end">-60</text>
<text x="44" y="348" font-size="12" text-anchor="end">-70</text>
<text x="44" y="392" font-size="12" text-anchor="end">-80</text>
<text x="44" y="435" font-size="12" text-anchor="end">-90</text>
<text x="44" y="478" font-size="12" text-anchor="end">-100</text>
<text x="44" y="522" font-size="12" text-anchor="end">-110</text>
<text x="44" y="565" font-size="12" text-anchor="end">-120</text>
<text x="44" y="608" font-size="12" text-anchor="end">-130</text>
<text x="44" y="652" font-size="12" text-anchor="end">-140</text>
<text x="44" y="695" font-size="12" text-anchor="end">-150</text>
<text x="44" y="738" font-size="12" text-anchor="end">-160</text>
<text x="44" y="782" font-size="12" text-anchor="end">-170</text>
<text x="57.5" y="809" font-size="12" text-anchor="middle">10</text>
<text x="178.5" y="809" font-size="12" text-anchor="middle">20</text>
<text x="249.5" y="809" font-size="12" text-anchor="middle">30</text>
<text x="300.5" y="809" font-size="12" text-anchor="middle">40</text>
<text x="339.5" y="809" font-size="12" text-anchor="middle">50</text>
<text x="370.5" y="809" font-size="12" text-anchor="middle">60</text>
<text x="421.5" y="809" font-size="12" text-anchor="middle">80</text>
<text x="460.5" y="809" font-size="12" text-anchor="middle">100</text>
<text x="581.5" y="809" font-size="12" text-anchor="middle">200</text>
<text x="652.5" y="809" font-size="12" text-anchor="middle">300</text>
<text x="703.5" y="809" font-size="12" text-anchor="middle">400</text>
<text x="742.5" y="809" font-size="12" text-anchor="middle">500</text>
<text x="773.5" y="809" font-size="12" text-anchor="middle">600</text>
<text x="824.5" y="809" font-size="12" text-anchor="middle">800</text>
<text x="863.5" y="809" font-size="12" text-anchor="middle">1k</text>
<text x="984.5" y="809" font-size="12" text-anchor="middle">2k</text>
<text x="1055.5" y="809" font-size="12" text-anchor="middle">3k</text>
<text x="1106.5" y="809" font-size="12" text-anchor="middle">4k</text>
<text x="1145.5" y="809" font-size="12" text-anchor="middle">5k</text>
<text x="1176.5" y="809" font-size="12" text-anchor="middle">6k</text>
<text x="1227.5" y="809" font-size="12" text-anchor="middle">8k</text>
<text x="1266.5" y="809" font-size="12" text-anchor="middle">10k</text>
<text x="1387.5" y="809" font-size="12" text-anchor="middle">20k</text>
<text x="1458.5" y="809" font-size="12" text-anchor="middle">30k</text>
<text x="1509.5" y="809" font-size="12" text-anchor="middle">40k</text>
<text x="1548.5" y="809" font-size="12" text-anchor="middle">50k</text>
<text x="1579.5" y="809" font-size="12" text-anchor="middle">60k</text>
<text x="1630.5" y="809" font-size="12" text-anchor="middle">80k</text>
<text x="850" y="821" font-size="11.4" text-anchor="middle">Frequency (Hz)</text>
<text transform="translate(14.5 413) rotate(-90)" font-size="11.3" text-anchor="middle">Level (dBrA)</text>
<text x="766" y="11" font-size="11">FFT Spectrum CD 85 1 kHz 0 dBfs</text>
<text x="1650.8" y="27" font-size="12.2" text-anchor="end">12/01/2020 13:23:58.977</text>
<g fill="none" stroke="#1b5c8c" stroke-linecap="round"><path d="M1620.6 53.6 L1629.2 44.8 L1630.2 44.8" stroke-width="2.1" stroke-linejoin="round"/><path d="M1625.2 50.9 H1630.2" stroke-width="1.5"/><path d="M1629.9 45 L1631.4 55.4" stroke-width="2"/><ellipse cx="1635.2" cy="49.6" rx="3.1" ry="3.4" stroke-width="1.9"/><path d="M1630.4 42 C1637.5 41.2 1642.6 45 1642.6 49.8 C1642.6 54.8 1638 57.6 1632 57.4" stroke-width="1.25"/></g>
<rect x="1679.5" y="34.5" width="116" height="63" fill="#fff" stroke="#000" stroke-width="1"/>
<rect x="1680" y="35" width="115" height="20" fill="#2a7db8"/>
<text x="1737.5" y="49" font-size="11.8" font-weight="bold" text-anchor="middle" style="fill:#fff">Data</text>
<rect x="1700" y="60" width="12" height="12" fill="#1c3a86"/>
<rect x="1700" y="81" width="12" height="12" fill="#cc2222"/>
<text x="1715" y="70" font-size="12">Left</text>
<text x="1715" y="91" font-size="12">Right</text>
<rect x="0.5" y="0.5" width="1799" height="826" fill="none" stroke="#000" stroke-width="1"/>
</svg></body></html>
